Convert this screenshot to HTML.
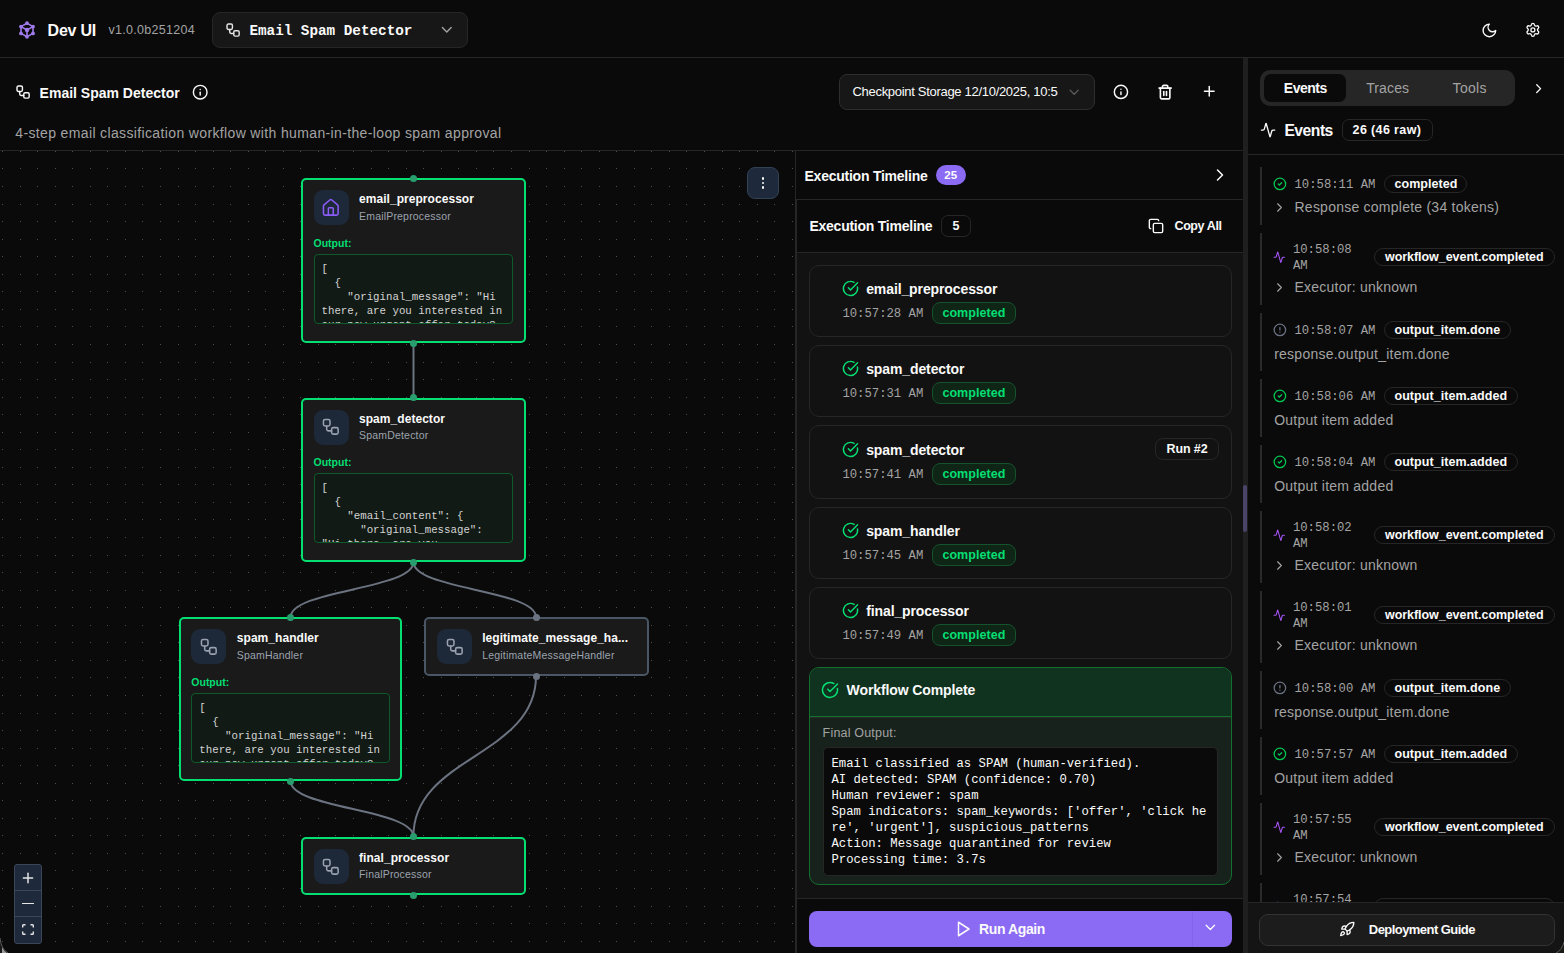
<!DOCTYPE html>
<html><head><meta charset="utf-8"><title>Dev UI</title>
<style>
html,body{margin:0;padding:0;}
body{width:1564px;height:953px;overflow:hidden;background:#0a0a0a;position:relative;font-family:"Liberation Sans", sans-serif;}
.a{position:absolute;}
.t{position:absolute;white-space:nowrap;}
.s{font-family:"Liberation Sans", sans-serif;}
.m{font-family:"Liberation Mono", monospace;}
svg{display:block;}
</style></head><body>
<div class="a" style="left:0px;top:57px;width:1564px;height:1px;background:#262626;"></div>
<svg class="a" style="left:18px;top:21px" width="18" height="18" viewBox="0 0 18 18"><g stroke="#9f7aea" stroke-width="1.6" fill="none"><path d="M9 2.2 L15 5.6 L15 12.4 L9 15.8 L3 12.4 L3 5.6 Z"/><path d="M9 9 L9 15.8 M9 9 L3 5.6 M9 9 L15 5.6"/></g><g fill="#9f7aea"><circle cx="9" cy="2.2" r="1.9"/><circle cx="15" cy="5.6" r="1.9"/><circle cx="15" cy="12.4" r="1.9"/><circle cx="9" cy="15.8" r="1.9"/><circle cx="3" cy="12.4" r="1.9"/><circle cx="3" cy="5.6" r="1.9"/><circle cx="9" cy="9" r="2.2"/></g></svg>
<div class="t s" style="left:47.60px;top:21.06px;font-size:16px;line-height:20.8px;color:#fafafa;font-weight:700;letter-spacing:-0.25px;">Dev UI</div>
<div class="t s" style="left:108.60px;top:21.54px;font-size:12.5px;line-height:16.25px;color:#a3a3a3;letter-spacing:0.28px;">v1.0.0b251204</div>
<div class="a" style="left:212px;top:12px;width:256px;height:36px;background:#171717;border:1px solid #262626;border-radius:8px;box-sizing:border-box;"></div>
<svg class="a" style="left:224.65px;top:21.95px;" width="16.2" height="16.2" viewBox="0 0 24 24" fill="none" stroke="#e5e5e5" stroke-width="2.1" stroke-linecap="round" stroke-linejoin="round"><rect width="8" height="8" x="3" y="3" rx="2"/><path d="M7 11v4a2 2 0 0 0 2 2h4"/><rect width="8" height="8" x="13" y="13" rx="2"/></svg>
<div class="t m" style="left:249.40px;top:21.79px;font-size:14.3px;line-height:18.59px;color:#fafafa;font-weight:700;">Email Spam Detector</div>
<svg class="a" style="left:438.2px;top:21.2px;" width="17.6" height="17.6" viewBox="0 0 24 24" fill="none" stroke="#a3a3a3" stroke-width="1.9" stroke-linecap="round" stroke-linejoin="round"><path d="m6 9 6 6 6-6"/></svg>
<svg class="a" style="left:1480.6px;top:21.7px;" width="16.8" height="16.8" viewBox="0 0 24 24" fill="none" stroke="#fafafa" stroke-width="2" stroke-linecap="round" stroke-linejoin="round"><path d="M12 3a6 6 0 0 0 9 9 9 9 0 1 1-9-9Z"/></svg>
<svg class="a" style="left:1525.1px;top:21.9px;" width="15.75" height="15.75" viewBox="0 0 24 24" fill="none" stroke="#fafafa" stroke-width="2" stroke-linecap="round" stroke-linejoin="round"><path d="M9.671 4.136a2.34 2.34 0 0 1 4.659 0 2.34 2.34 0 0 0 3.319 1.915 2.34 2.34 0 0 1 2.33 4.033 2.34 2.34 0 0 0 0 3.831 2.34 2.34 0 0 1-2.33 4.033 2.34 2.34 0 0 0-3.319 1.915 2.34 2.34 0 0 1-4.659 0 2.34 2.34 0 0 0-3.32-1.915 2.34 2.34 0 0 1-2.33-4.033 2.34 2.34 0 0 0 0-3.831A2.34 2.34 0 0 1 6.35 6.051a2.34 2.34 0 0 0 3.32-1.915"/><circle cx="12" cy="12" r="3"/></svg>
<div class="a" style="left:0px;top:150px;width:1243px;height:1px;background:#262626;"></div>
<svg class="a" style="left:14.95px;top:83.95px;" width="16.2" height="16.2" viewBox="0 0 24 24" fill="none" stroke="#fafafa" stroke-width="2.1" stroke-linecap="round" stroke-linejoin="round"><rect width="8" height="8" x="3" y="3" rx="2"/><path d="M7 11v4a2 2 0 0 0 2 2h4"/><rect width="8" height="8" x="13" y="13" rx="2"/></svg>
<div class="t s" style="left:39.60px;top:84.05px;font-size:14px;line-height:18.2px;color:#fafafa;font-weight:700;">Email Spam Detector</div>
<svg class="a" style="left:191.8px;top:83.9px;" width="16.4" height="16.4" viewBox="0 0 24 24" fill="none" stroke="#fafafa" stroke-width="2.1" stroke-linecap="round" stroke-linejoin="round"><circle cx="12" cy="12" r="10"/><path d="M12 16v-4"/><path d="M12 8h.01"/></svg>
<div class="t s" style="left:15.30px;top:123.55px;font-size:14px;line-height:18.2px;color:#a3a3a3;letter-spacing:0.36px;">4-step email classification workflow with human-in-the-loop spam approval</div>
<div class="a" style="left:839px;top:74px;width:256px;height:36px;background:#171717;border:1px solid #2e2e2e;border-radius:8px;box-sizing:border-box;"></div>
<div class="a" style="left:852px;top:80px;width:206px;height:24px;overflow:hidden;">
<div class="t s" style="left:0.50px;top:3.55px;font-size:13px;line-height:16.9px;color:#fafafa;letter-spacing:-0.3px;white-space:nowrap;">Checkpoint Storage 12/10/2025, 10:58:11 AM</div>
</div>
<svg class="a" style="left:1065.8px;top:83.7px;" width="16.3" height="16.3" viewBox="0 0 24 24" fill="none" stroke="#5c5c5c" stroke-width="2" stroke-linecap="round" stroke-linejoin="round"><path d="m6 9 6 6 6-6"/></svg>
<svg class="a" style="left:1113px;top:83.7px;" width="15.9" height="15.9" viewBox="0 0 24 24" fill="none" stroke="#fafafa" stroke-width="2.2" stroke-linecap="round" stroke-linejoin="round"><circle cx="12" cy="12" r="10"/><path d="M12 16v-4"/><path d="M12 8h.01"/></svg>
<svg class="a" style="left:1156.8px;top:83.9px;" width="16.25" height="16.25" viewBox="0 0 24 24" fill="none" stroke="#fafafa" stroke-width="2.4" stroke-linecap="round" stroke-linejoin="round"><path d="M3 6h18"/><path d="M19 6v14c0 1-1 2-2 2H7c-1 0-2-1-2-2V6"/><path d="M8 6V4c0-1 1-2 2-2h4c1 0 2 1 2 2v2"/><line x1="10" x2="10" y1="11" y2="17"/><line x1="14" x2="14" y1="11" y2="17"/></svg>
<svg class="a" style="left:1200.75px;top:83.45px;" width="16.5" height="16.5" viewBox="0 0 24 24" fill="none" stroke="#fafafa" stroke-width="2.2" stroke-linecap="round" stroke-linejoin="round"><path d="M5 12h14"/><path d="M12 5v14"/></svg>
<svg class="a" style="left:0;top:0" width="795" height="953"><path fill="#4d4d4d" d="M2 151h1v1h-1zM20 151h1v1h-1zM37 151h1v1h-1zM55 151h1v1h-1zM72 151h1v1h-1zM90 151h1v1h-1zM107 151h1v1h-1zM125 151h1v1h-1zM142 151h1v1h-1zM160 151h1v1h-1zM178 151h1v1h-1zM195 151h1v1h-1zM213 151h1v1h-1zM230 151h1v1h-1zM248 151h1v1h-1zM265 151h1v1h-1zM283 151h1v1h-1zM300 151h1v1h-1zM318 151h1v1h-1zM335 151h1v1h-1zM353 151h1v1h-1zM371 151h1v1h-1zM388 151h1v1h-1zM406 151h1v1h-1zM423 151h1v1h-1zM441 151h1v1h-1zM458 151h1v1h-1zM476 151h1v1h-1zM493 151h1v1h-1zM511 151h1v1h-1zM529 151h1v1h-1zM546 151h1v1h-1zM564 151h1v1h-1zM581 151h1v1h-1zM599 151h1v1h-1zM616 151h1v1h-1zM634 151h1v1h-1zM651 151h1v1h-1zM669 151h1v1h-1zM686 151h1v1h-1zM704 151h1v1h-1zM722 151h1v1h-1zM739 151h1v1h-1zM757 151h1v1h-1zM774 151h1v1h-1zM792 151h1v1h-1zM2 168h1v1h-1zM20 168h1v1h-1zM37 168h1v1h-1zM55 168h1v1h-1zM72 168h1v1h-1zM90 168h1v1h-1zM107 168h1v1h-1zM125 168h1v1h-1zM142 168h1v1h-1zM160 168h1v1h-1zM178 168h1v1h-1zM195 168h1v1h-1zM213 168h1v1h-1zM230 168h1v1h-1zM248 168h1v1h-1zM265 168h1v1h-1zM283 168h1v1h-1zM300 168h1v1h-1zM318 168h1v1h-1zM335 168h1v1h-1zM353 168h1v1h-1zM371 168h1v1h-1zM388 168h1v1h-1zM406 168h1v1h-1zM423 168h1v1h-1zM441 168h1v1h-1zM458 168h1v1h-1zM476 168h1v1h-1zM493 168h1v1h-1zM511 168h1v1h-1zM529 168h1v1h-1zM546 168h1v1h-1zM564 168h1v1h-1zM581 168h1v1h-1zM599 168h1v1h-1zM616 168h1v1h-1zM634 168h1v1h-1zM651 168h1v1h-1zM669 168h1v1h-1zM686 168h1v1h-1zM704 168h1v1h-1zM722 168h1v1h-1zM739 168h1v1h-1zM757 168h1v1h-1zM774 168h1v1h-1zM792 168h1v1h-1zM2 186h1v1h-1zM20 186h1v1h-1zM37 186h1v1h-1zM55 186h1v1h-1zM72 186h1v1h-1zM90 186h1v1h-1zM107 186h1v1h-1zM125 186h1v1h-1zM142 186h1v1h-1zM160 186h1v1h-1zM178 186h1v1h-1zM195 186h1v1h-1zM213 186h1v1h-1zM230 186h1v1h-1zM248 186h1v1h-1zM265 186h1v1h-1zM283 186h1v1h-1zM300 186h1v1h-1zM318 186h1v1h-1zM335 186h1v1h-1zM353 186h1v1h-1zM371 186h1v1h-1zM388 186h1v1h-1zM406 186h1v1h-1zM423 186h1v1h-1zM441 186h1v1h-1zM458 186h1v1h-1zM476 186h1v1h-1zM493 186h1v1h-1zM511 186h1v1h-1zM529 186h1v1h-1zM546 186h1v1h-1zM564 186h1v1h-1zM581 186h1v1h-1zM599 186h1v1h-1zM616 186h1v1h-1zM634 186h1v1h-1zM651 186h1v1h-1zM669 186h1v1h-1zM686 186h1v1h-1zM704 186h1v1h-1zM722 186h1v1h-1zM739 186h1v1h-1zM757 186h1v1h-1zM774 186h1v1h-1zM792 186h1v1h-1zM2 204h1v1h-1zM20 204h1v1h-1zM37 204h1v1h-1zM55 204h1v1h-1zM72 204h1v1h-1zM90 204h1v1h-1zM107 204h1v1h-1zM125 204h1v1h-1zM142 204h1v1h-1zM160 204h1v1h-1zM178 204h1v1h-1zM195 204h1v1h-1zM213 204h1v1h-1zM230 204h1v1h-1zM248 204h1v1h-1zM265 204h1v1h-1zM283 204h1v1h-1zM300 204h1v1h-1zM318 204h1v1h-1zM335 204h1v1h-1zM353 204h1v1h-1zM371 204h1v1h-1zM388 204h1v1h-1zM406 204h1v1h-1zM423 204h1v1h-1zM441 204h1v1h-1zM458 204h1v1h-1zM476 204h1v1h-1zM493 204h1v1h-1zM511 204h1v1h-1zM529 204h1v1h-1zM546 204h1v1h-1zM564 204h1v1h-1zM581 204h1v1h-1zM599 204h1v1h-1zM616 204h1v1h-1zM634 204h1v1h-1zM651 204h1v1h-1zM669 204h1v1h-1zM686 204h1v1h-1zM704 204h1v1h-1zM722 204h1v1h-1zM739 204h1v1h-1zM757 204h1v1h-1zM774 204h1v1h-1zM792 204h1v1h-1zM2 221h1v1h-1zM20 221h1v1h-1zM37 221h1v1h-1zM55 221h1v1h-1zM72 221h1v1h-1zM90 221h1v1h-1zM107 221h1v1h-1zM125 221h1v1h-1zM142 221h1v1h-1zM160 221h1v1h-1zM178 221h1v1h-1zM195 221h1v1h-1zM213 221h1v1h-1zM230 221h1v1h-1zM248 221h1v1h-1zM265 221h1v1h-1zM283 221h1v1h-1zM300 221h1v1h-1zM318 221h1v1h-1zM335 221h1v1h-1zM353 221h1v1h-1zM371 221h1v1h-1zM388 221h1v1h-1zM406 221h1v1h-1zM423 221h1v1h-1zM441 221h1v1h-1zM458 221h1v1h-1zM476 221h1v1h-1zM493 221h1v1h-1zM511 221h1v1h-1zM529 221h1v1h-1zM546 221h1v1h-1zM564 221h1v1h-1zM581 221h1v1h-1zM599 221h1v1h-1zM616 221h1v1h-1zM634 221h1v1h-1zM651 221h1v1h-1zM669 221h1v1h-1zM686 221h1v1h-1zM704 221h1v1h-1zM722 221h1v1h-1zM739 221h1v1h-1zM757 221h1v1h-1zM774 221h1v1h-1zM792 221h1v1h-1zM2 239h1v1h-1zM20 239h1v1h-1zM37 239h1v1h-1zM55 239h1v1h-1zM72 239h1v1h-1zM90 239h1v1h-1zM107 239h1v1h-1zM125 239h1v1h-1zM142 239h1v1h-1zM160 239h1v1h-1zM178 239h1v1h-1zM195 239h1v1h-1zM213 239h1v1h-1zM230 239h1v1h-1zM248 239h1v1h-1zM265 239h1v1h-1zM283 239h1v1h-1zM300 239h1v1h-1zM318 239h1v1h-1zM335 239h1v1h-1zM353 239h1v1h-1zM371 239h1v1h-1zM388 239h1v1h-1zM406 239h1v1h-1zM423 239h1v1h-1zM441 239h1v1h-1zM458 239h1v1h-1zM476 239h1v1h-1zM493 239h1v1h-1zM511 239h1v1h-1zM529 239h1v1h-1zM546 239h1v1h-1zM564 239h1v1h-1zM581 239h1v1h-1zM599 239h1v1h-1zM616 239h1v1h-1zM634 239h1v1h-1zM651 239h1v1h-1zM669 239h1v1h-1zM686 239h1v1h-1zM704 239h1v1h-1zM722 239h1v1h-1zM739 239h1v1h-1zM757 239h1v1h-1zM774 239h1v1h-1zM792 239h1v1h-1zM2 256h1v1h-1zM20 256h1v1h-1zM37 256h1v1h-1zM55 256h1v1h-1zM72 256h1v1h-1zM90 256h1v1h-1zM107 256h1v1h-1zM125 256h1v1h-1zM142 256h1v1h-1zM160 256h1v1h-1zM178 256h1v1h-1zM195 256h1v1h-1zM213 256h1v1h-1zM230 256h1v1h-1zM248 256h1v1h-1zM265 256h1v1h-1zM283 256h1v1h-1zM300 256h1v1h-1zM318 256h1v1h-1zM335 256h1v1h-1zM353 256h1v1h-1zM371 256h1v1h-1zM388 256h1v1h-1zM406 256h1v1h-1zM423 256h1v1h-1zM441 256h1v1h-1zM458 256h1v1h-1zM476 256h1v1h-1zM493 256h1v1h-1zM511 256h1v1h-1zM529 256h1v1h-1zM546 256h1v1h-1zM564 256h1v1h-1zM581 256h1v1h-1zM599 256h1v1h-1zM616 256h1v1h-1zM634 256h1v1h-1zM651 256h1v1h-1zM669 256h1v1h-1zM686 256h1v1h-1zM704 256h1v1h-1zM722 256h1v1h-1zM739 256h1v1h-1zM757 256h1v1h-1zM774 256h1v1h-1zM792 256h1v1h-1zM2 274h1v1h-1zM20 274h1v1h-1zM37 274h1v1h-1zM55 274h1v1h-1zM72 274h1v1h-1zM90 274h1v1h-1zM107 274h1v1h-1zM125 274h1v1h-1zM142 274h1v1h-1zM160 274h1v1h-1zM178 274h1v1h-1zM195 274h1v1h-1zM213 274h1v1h-1zM230 274h1v1h-1zM248 274h1v1h-1zM265 274h1v1h-1zM283 274h1v1h-1zM300 274h1v1h-1zM318 274h1v1h-1zM335 274h1v1h-1zM353 274h1v1h-1zM371 274h1v1h-1zM388 274h1v1h-1zM406 274h1v1h-1zM423 274h1v1h-1zM441 274h1v1h-1zM458 274h1v1h-1zM476 274h1v1h-1zM493 274h1v1h-1zM511 274h1v1h-1zM529 274h1v1h-1zM546 274h1v1h-1zM564 274h1v1h-1zM581 274h1v1h-1zM599 274h1v1h-1zM616 274h1v1h-1zM634 274h1v1h-1zM651 274h1v1h-1zM669 274h1v1h-1zM686 274h1v1h-1zM704 274h1v1h-1zM722 274h1v1h-1zM739 274h1v1h-1zM757 274h1v1h-1zM774 274h1v1h-1zM792 274h1v1h-1zM2 291h1v1h-1zM20 291h1v1h-1zM37 291h1v1h-1zM55 291h1v1h-1zM72 291h1v1h-1zM90 291h1v1h-1zM107 291h1v1h-1zM125 291h1v1h-1zM142 291h1v1h-1zM160 291h1v1h-1zM178 291h1v1h-1zM195 291h1v1h-1zM213 291h1v1h-1zM230 291h1v1h-1zM248 291h1v1h-1zM265 291h1v1h-1zM283 291h1v1h-1zM300 291h1v1h-1zM318 291h1v1h-1zM335 291h1v1h-1zM353 291h1v1h-1zM371 291h1v1h-1zM388 291h1v1h-1zM406 291h1v1h-1zM423 291h1v1h-1zM441 291h1v1h-1zM458 291h1v1h-1zM476 291h1v1h-1zM493 291h1v1h-1zM511 291h1v1h-1zM529 291h1v1h-1zM546 291h1v1h-1zM564 291h1v1h-1zM581 291h1v1h-1zM599 291h1v1h-1zM616 291h1v1h-1zM634 291h1v1h-1zM651 291h1v1h-1zM669 291h1v1h-1zM686 291h1v1h-1zM704 291h1v1h-1zM722 291h1v1h-1zM739 291h1v1h-1zM757 291h1v1h-1zM774 291h1v1h-1zM792 291h1v1h-1zM2 309h1v1h-1zM20 309h1v1h-1zM37 309h1v1h-1zM55 309h1v1h-1zM72 309h1v1h-1zM90 309h1v1h-1zM107 309h1v1h-1zM125 309h1v1h-1zM142 309h1v1h-1zM160 309h1v1h-1zM178 309h1v1h-1zM195 309h1v1h-1zM213 309h1v1h-1zM230 309h1v1h-1zM248 309h1v1h-1zM265 309h1v1h-1zM283 309h1v1h-1zM300 309h1v1h-1zM318 309h1v1h-1zM335 309h1v1h-1zM353 309h1v1h-1zM371 309h1v1h-1zM388 309h1v1h-1zM406 309h1v1h-1zM423 309h1v1h-1zM441 309h1v1h-1zM458 309h1v1h-1zM476 309h1v1h-1zM493 309h1v1h-1zM511 309h1v1h-1zM529 309h1v1h-1zM546 309h1v1h-1zM564 309h1v1h-1zM581 309h1v1h-1zM599 309h1v1h-1zM616 309h1v1h-1zM634 309h1v1h-1zM651 309h1v1h-1zM669 309h1v1h-1zM686 309h1v1h-1zM704 309h1v1h-1zM722 309h1v1h-1zM739 309h1v1h-1zM757 309h1v1h-1zM774 309h1v1h-1zM792 309h1v1h-1zM2 326h1v1h-1zM20 326h1v1h-1zM37 326h1v1h-1zM55 326h1v1h-1zM72 326h1v1h-1zM90 326h1v1h-1zM107 326h1v1h-1zM125 326h1v1h-1zM142 326h1v1h-1zM160 326h1v1h-1zM178 326h1v1h-1zM195 326h1v1h-1zM213 326h1v1h-1zM230 326h1v1h-1zM248 326h1v1h-1zM265 326h1v1h-1zM283 326h1v1h-1zM300 326h1v1h-1zM318 326h1v1h-1zM335 326h1v1h-1zM353 326h1v1h-1zM371 326h1v1h-1zM388 326h1v1h-1zM406 326h1v1h-1zM423 326h1v1h-1zM441 326h1v1h-1zM458 326h1v1h-1zM476 326h1v1h-1zM493 326h1v1h-1zM511 326h1v1h-1zM529 326h1v1h-1zM546 326h1v1h-1zM564 326h1v1h-1zM581 326h1v1h-1zM599 326h1v1h-1zM616 326h1v1h-1zM634 326h1v1h-1zM651 326h1v1h-1zM669 326h1v1h-1zM686 326h1v1h-1zM704 326h1v1h-1zM722 326h1v1h-1zM739 326h1v1h-1zM757 326h1v1h-1zM774 326h1v1h-1zM792 326h1v1h-1zM2 344h1v1h-1zM20 344h1v1h-1zM37 344h1v1h-1zM55 344h1v1h-1zM72 344h1v1h-1zM90 344h1v1h-1zM107 344h1v1h-1zM125 344h1v1h-1zM142 344h1v1h-1zM160 344h1v1h-1zM178 344h1v1h-1zM195 344h1v1h-1zM213 344h1v1h-1zM230 344h1v1h-1zM248 344h1v1h-1zM265 344h1v1h-1zM283 344h1v1h-1zM300 344h1v1h-1zM318 344h1v1h-1zM335 344h1v1h-1zM353 344h1v1h-1zM371 344h1v1h-1zM388 344h1v1h-1zM406 344h1v1h-1zM423 344h1v1h-1zM441 344h1v1h-1zM458 344h1v1h-1zM476 344h1v1h-1zM493 344h1v1h-1zM511 344h1v1h-1zM529 344h1v1h-1zM546 344h1v1h-1zM564 344h1v1h-1zM581 344h1v1h-1zM599 344h1v1h-1zM616 344h1v1h-1zM634 344h1v1h-1zM651 344h1v1h-1zM669 344h1v1h-1zM686 344h1v1h-1zM704 344h1v1h-1zM722 344h1v1h-1zM739 344h1v1h-1zM757 344h1v1h-1zM774 344h1v1h-1zM792 344h1v1h-1zM2 362h1v1h-1zM20 362h1v1h-1zM37 362h1v1h-1zM55 362h1v1h-1zM72 362h1v1h-1zM90 362h1v1h-1zM107 362h1v1h-1zM125 362h1v1h-1zM142 362h1v1h-1zM160 362h1v1h-1zM178 362h1v1h-1zM195 362h1v1h-1zM213 362h1v1h-1zM230 362h1v1h-1zM248 362h1v1h-1zM265 362h1v1h-1zM283 362h1v1h-1zM300 362h1v1h-1zM318 362h1v1h-1zM335 362h1v1h-1zM353 362h1v1h-1zM371 362h1v1h-1zM388 362h1v1h-1zM406 362h1v1h-1zM423 362h1v1h-1zM441 362h1v1h-1zM458 362h1v1h-1zM476 362h1v1h-1zM493 362h1v1h-1zM511 362h1v1h-1zM529 362h1v1h-1zM546 362h1v1h-1zM564 362h1v1h-1zM581 362h1v1h-1zM599 362h1v1h-1zM616 362h1v1h-1zM634 362h1v1h-1zM651 362h1v1h-1zM669 362h1v1h-1zM686 362h1v1h-1zM704 362h1v1h-1zM722 362h1v1h-1zM739 362h1v1h-1zM757 362h1v1h-1zM774 362h1v1h-1zM792 362h1v1h-1zM2 379h1v1h-1zM20 379h1v1h-1zM37 379h1v1h-1zM55 379h1v1h-1zM72 379h1v1h-1zM90 379h1v1h-1zM107 379h1v1h-1zM125 379h1v1h-1zM142 379h1v1h-1zM160 379h1v1h-1zM178 379h1v1h-1zM195 379h1v1h-1zM213 379h1v1h-1zM230 379h1v1h-1zM248 379h1v1h-1zM265 379h1v1h-1zM283 379h1v1h-1zM300 379h1v1h-1zM318 379h1v1h-1zM335 379h1v1h-1zM353 379h1v1h-1zM371 379h1v1h-1zM388 379h1v1h-1zM406 379h1v1h-1zM423 379h1v1h-1zM441 379h1v1h-1zM458 379h1v1h-1zM476 379h1v1h-1zM493 379h1v1h-1zM511 379h1v1h-1zM529 379h1v1h-1zM546 379h1v1h-1zM564 379h1v1h-1zM581 379h1v1h-1zM599 379h1v1h-1zM616 379h1v1h-1zM634 379h1v1h-1zM651 379h1v1h-1zM669 379h1v1h-1zM686 379h1v1h-1zM704 379h1v1h-1zM722 379h1v1h-1zM739 379h1v1h-1zM757 379h1v1h-1zM774 379h1v1h-1zM792 379h1v1h-1zM2 397h1v1h-1zM20 397h1v1h-1zM37 397h1v1h-1zM55 397h1v1h-1zM72 397h1v1h-1zM90 397h1v1h-1zM107 397h1v1h-1zM125 397h1v1h-1zM142 397h1v1h-1zM160 397h1v1h-1zM178 397h1v1h-1zM195 397h1v1h-1zM213 397h1v1h-1zM230 397h1v1h-1zM248 397h1v1h-1zM265 397h1v1h-1zM283 397h1v1h-1zM300 397h1v1h-1zM318 397h1v1h-1zM335 397h1v1h-1zM353 397h1v1h-1zM371 397h1v1h-1zM388 397h1v1h-1zM406 397h1v1h-1zM423 397h1v1h-1zM441 397h1v1h-1zM458 397h1v1h-1zM476 397h1v1h-1zM493 397h1v1h-1zM511 397h1v1h-1zM529 397h1v1h-1zM546 397h1v1h-1zM564 397h1v1h-1zM581 397h1v1h-1zM599 397h1v1h-1zM616 397h1v1h-1zM634 397h1v1h-1zM651 397h1v1h-1zM669 397h1v1h-1zM686 397h1v1h-1zM704 397h1v1h-1zM722 397h1v1h-1zM739 397h1v1h-1zM757 397h1v1h-1zM774 397h1v1h-1zM792 397h1v1h-1zM2 414h1v1h-1zM20 414h1v1h-1zM37 414h1v1h-1zM55 414h1v1h-1zM72 414h1v1h-1zM90 414h1v1h-1zM107 414h1v1h-1zM125 414h1v1h-1zM142 414h1v1h-1zM160 414h1v1h-1zM178 414h1v1h-1zM195 414h1v1h-1zM213 414h1v1h-1zM230 414h1v1h-1zM248 414h1v1h-1zM265 414h1v1h-1zM283 414h1v1h-1zM300 414h1v1h-1zM318 414h1v1h-1zM335 414h1v1h-1zM353 414h1v1h-1zM371 414h1v1h-1zM388 414h1v1h-1zM406 414h1v1h-1zM423 414h1v1h-1zM441 414h1v1h-1zM458 414h1v1h-1zM476 414h1v1h-1zM493 414h1v1h-1zM511 414h1v1h-1zM529 414h1v1h-1zM546 414h1v1h-1zM564 414h1v1h-1zM581 414h1v1h-1zM599 414h1v1h-1zM616 414h1v1h-1zM634 414h1v1h-1zM651 414h1v1h-1zM669 414h1v1h-1zM686 414h1v1h-1zM704 414h1v1h-1zM722 414h1v1h-1zM739 414h1v1h-1zM757 414h1v1h-1zM774 414h1v1h-1zM792 414h1v1h-1zM2 432h1v1h-1zM20 432h1v1h-1zM37 432h1v1h-1zM55 432h1v1h-1zM72 432h1v1h-1zM90 432h1v1h-1zM107 432h1v1h-1zM125 432h1v1h-1zM142 432h1v1h-1zM160 432h1v1h-1zM178 432h1v1h-1zM195 432h1v1h-1zM213 432h1v1h-1zM230 432h1v1h-1zM248 432h1v1h-1zM265 432h1v1h-1zM283 432h1v1h-1zM300 432h1v1h-1zM318 432h1v1h-1zM335 432h1v1h-1zM353 432h1v1h-1zM371 432h1v1h-1zM388 432h1v1h-1zM406 432h1v1h-1zM423 432h1v1h-1zM441 432h1v1h-1zM458 432h1v1h-1zM476 432h1v1h-1zM493 432h1v1h-1zM511 432h1v1h-1zM529 432h1v1h-1zM546 432h1v1h-1zM564 432h1v1h-1zM581 432h1v1h-1zM599 432h1v1h-1zM616 432h1v1h-1zM634 432h1v1h-1zM651 432h1v1h-1zM669 432h1v1h-1zM686 432h1v1h-1zM704 432h1v1h-1zM722 432h1v1h-1zM739 432h1v1h-1zM757 432h1v1h-1zM774 432h1v1h-1zM792 432h1v1h-1zM2 449h1v1h-1zM20 449h1v1h-1zM37 449h1v1h-1zM55 449h1v1h-1zM72 449h1v1h-1zM90 449h1v1h-1zM107 449h1v1h-1zM125 449h1v1h-1zM142 449h1v1h-1zM160 449h1v1h-1zM178 449h1v1h-1zM195 449h1v1h-1zM213 449h1v1h-1zM230 449h1v1h-1zM248 449h1v1h-1zM265 449h1v1h-1zM283 449h1v1h-1zM300 449h1v1h-1zM318 449h1v1h-1zM335 449h1v1h-1zM353 449h1v1h-1zM371 449h1v1h-1zM388 449h1v1h-1zM406 449h1v1h-1zM423 449h1v1h-1zM441 449h1v1h-1zM458 449h1v1h-1zM476 449h1v1h-1zM493 449h1v1h-1zM511 449h1v1h-1zM529 449h1v1h-1zM546 449h1v1h-1zM564 449h1v1h-1zM581 449h1v1h-1zM599 449h1v1h-1zM616 449h1v1h-1zM634 449h1v1h-1zM651 449h1v1h-1zM669 449h1v1h-1zM686 449h1v1h-1zM704 449h1v1h-1zM722 449h1v1h-1zM739 449h1v1h-1zM757 449h1v1h-1zM774 449h1v1h-1zM792 449h1v1h-1zM2 467h1v1h-1zM20 467h1v1h-1zM37 467h1v1h-1zM55 467h1v1h-1zM72 467h1v1h-1zM90 467h1v1h-1zM107 467h1v1h-1zM125 467h1v1h-1zM142 467h1v1h-1zM160 467h1v1h-1zM178 467h1v1h-1zM195 467h1v1h-1zM213 467h1v1h-1zM230 467h1v1h-1zM248 467h1v1h-1zM265 467h1v1h-1zM283 467h1v1h-1zM300 467h1v1h-1zM318 467h1v1h-1zM335 467h1v1h-1zM353 467h1v1h-1zM371 467h1v1h-1zM388 467h1v1h-1zM406 467h1v1h-1zM423 467h1v1h-1zM441 467h1v1h-1zM458 467h1v1h-1zM476 467h1v1h-1zM493 467h1v1h-1zM511 467h1v1h-1zM529 467h1v1h-1zM546 467h1v1h-1zM564 467h1v1h-1zM581 467h1v1h-1zM599 467h1v1h-1zM616 467h1v1h-1zM634 467h1v1h-1zM651 467h1v1h-1zM669 467h1v1h-1zM686 467h1v1h-1zM704 467h1v1h-1zM722 467h1v1h-1zM739 467h1v1h-1zM757 467h1v1h-1zM774 467h1v1h-1zM792 467h1v1h-1zM2 484h1v1h-1zM20 484h1v1h-1zM37 484h1v1h-1zM55 484h1v1h-1zM72 484h1v1h-1zM90 484h1v1h-1zM107 484h1v1h-1zM125 484h1v1h-1zM142 484h1v1h-1zM160 484h1v1h-1zM178 484h1v1h-1zM195 484h1v1h-1zM213 484h1v1h-1zM230 484h1v1h-1zM248 484h1v1h-1zM265 484h1v1h-1zM283 484h1v1h-1zM300 484h1v1h-1zM318 484h1v1h-1zM335 484h1v1h-1zM353 484h1v1h-1zM371 484h1v1h-1zM388 484h1v1h-1zM406 484h1v1h-1zM423 484h1v1h-1zM441 484h1v1h-1zM458 484h1v1h-1zM476 484h1v1h-1zM493 484h1v1h-1zM511 484h1v1h-1zM529 484h1v1h-1zM546 484h1v1h-1zM564 484h1v1h-1zM581 484h1v1h-1zM599 484h1v1h-1zM616 484h1v1h-1zM634 484h1v1h-1zM651 484h1v1h-1zM669 484h1v1h-1zM686 484h1v1h-1zM704 484h1v1h-1zM722 484h1v1h-1zM739 484h1v1h-1zM757 484h1v1h-1zM774 484h1v1h-1zM792 484h1v1h-1zM2 502h1v1h-1zM20 502h1v1h-1zM37 502h1v1h-1zM55 502h1v1h-1zM72 502h1v1h-1zM90 502h1v1h-1zM107 502h1v1h-1zM125 502h1v1h-1zM142 502h1v1h-1zM160 502h1v1h-1zM178 502h1v1h-1zM195 502h1v1h-1zM213 502h1v1h-1zM230 502h1v1h-1zM248 502h1v1h-1zM265 502h1v1h-1zM283 502h1v1h-1zM300 502h1v1h-1zM318 502h1v1h-1zM335 502h1v1h-1zM353 502h1v1h-1zM371 502h1v1h-1zM388 502h1v1h-1zM406 502h1v1h-1zM423 502h1v1h-1zM441 502h1v1h-1zM458 502h1v1h-1zM476 502h1v1h-1zM493 502h1v1h-1zM511 502h1v1h-1zM529 502h1v1h-1zM546 502h1v1h-1zM564 502h1v1h-1zM581 502h1v1h-1zM599 502h1v1h-1zM616 502h1v1h-1zM634 502h1v1h-1zM651 502h1v1h-1zM669 502h1v1h-1zM686 502h1v1h-1zM704 502h1v1h-1zM722 502h1v1h-1zM739 502h1v1h-1zM757 502h1v1h-1zM774 502h1v1h-1zM792 502h1v1h-1zM2 519h1v1h-1zM20 519h1v1h-1zM37 519h1v1h-1zM55 519h1v1h-1zM72 519h1v1h-1zM90 519h1v1h-1zM107 519h1v1h-1zM125 519h1v1h-1zM142 519h1v1h-1zM160 519h1v1h-1zM178 519h1v1h-1zM195 519h1v1h-1zM213 519h1v1h-1zM230 519h1v1h-1zM248 519h1v1h-1zM265 519h1v1h-1zM283 519h1v1h-1zM300 519h1v1h-1zM318 519h1v1h-1zM335 519h1v1h-1zM353 519h1v1h-1zM371 519h1v1h-1zM388 519h1v1h-1zM406 519h1v1h-1zM423 519h1v1h-1zM441 519h1v1h-1zM458 519h1v1h-1zM476 519h1v1h-1zM493 519h1v1h-1zM511 519h1v1h-1zM529 519h1v1h-1zM546 519h1v1h-1zM564 519h1v1h-1zM581 519h1v1h-1zM599 519h1v1h-1zM616 519h1v1h-1zM634 519h1v1h-1zM651 519h1v1h-1zM669 519h1v1h-1zM686 519h1v1h-1zM704 519h1v1h-1zM722 519h1v1h-1zM739 519h1v1h-1zM757 519h1v1h-1zM774 519h1v1h-1zM792 519h1v1h-1zM2 537h1v1h-1zM20 537h1v1h-1zM37 537h1v1h-1zM55 537h1v1h-1zM72 537h1v1h-1zM90 537h1v1h-1zM107 537h1v1h-1zM125 537h1v1h-1zM142 537h1v1h-1zM160 537h1v1h-1zM178 537h1v1h-1zM195 537h1v1h-1zM213 537h1v1h-1zM230 537h1v1h-1zM248 537h1v1h-1zM265 537h1v1h-1zM283 537h1v1h-1zM300 537h1v1h-1zM318 537h1v1h-1zM335 537h1v1h-1zM353 537h1v1h-1zM371 537h1v1h-1zM388 537h1v1h-1zM406 537h1v1h-1zM423 537h1v1h-1zM441 537h1v1h-1zM458 537h1v1h-1zM476 537h1v1h-1zM493 537h1v1h-1zM511 537h1v1h-1zM529 537h1v1h-1zM546 537h1v1h-1zM564 537h1v1h-1zM581 537h1v1h-1zM599 537h1v1h-1zM616 537h1v1h-1zM634 537h1v1h-1zM651 537h1v1h-1zM669 537h1v1h-1zM686 537h1v1h-1zM704 537h1v1h-1zM722 537h1v1h-1zM739 537h1v1h-1zM757 537h1v1h-1zM774 537h1v1h-1zM792 537h1v1h-1zM2 555h1v1h-1zM20 555h1v1h-1zM37 555h1v1h-1zM55 555h1v1h-1zM72 555h1v1h-1zM90 555h1v1h-1zM107 555h1v1h-1zM125 555h1v1h-1zM142 555h1v1h-1zM160 555h1v1h-1zM178 555h1v1h-1zM195 555h1v1h-1zM213 555h1v1h-1zM230 555h1v1h-1zM248 555h1v1h-1zM265 555h1v1h-1zM283 555h1v1h-1zM300 555h1v1h-1zM318 555h1v1h-1zM335 555h1v1h-1zM353 555h1v1h-1zM371 555h1v1h-1zM388 555h1v1h-1zM406 555h1v1h-1zM423 555h1v1h-1zM441 555h1v1h-1zM458 555h1v1h-1zM476 555h1v1h-1zM493 555h1v1h-1zM511 555h1v1h-1zM529 555h1v1h-1zM546 555h1v1h-1zM564 555h1v1h-1zM581 555h1v1h-1zM599 555h1v1h-1zM616 555h1v1h-1zM634 555h1v1h-1zM651 555h1v1h-1zM669 555h1v1h-1zM686 555h1v1h-1zM704 555h1v1h-1zM722 555h1v1h-1zM739 555h1v1h-1zM757 555h1v1h-1zM774 555h1v1h-1zM792 555h1v1h-1zM2 572h1v1h-1zM20 572h1v1h-1zM37 572h1v1h-1zM55 572h1v1h-1zM72 572h1v1h-1zM90 572h1v1h-1zM107 572h1v1h-1zM125 572h1v1h-1zM142 572h1v1h-1zM160 572h1v1h-1zM178 572h1v1h-1zM195 572h1v1h-1zM213 572h1v1h-1zM230 572h1v1h-1zM248 572h1v1h-1zM265 572h1v1h-1zM283 572h1v1h-1zM300 572h1v1h-1zM318 572h1v1h-1zM335 572h1v1h-1zM353 572h1v1h-1zM371 572h1v1h-1zM388 572h1v1h-1zM406 572h1v1h-1zM423 572h1v1h-1zM441 572h1v1h-1zM458 572h1v1h-1zM476 572h1v1h-1zM493 572h1v1h-1zM511 572h1v1h-1zM529 572h1v1h-1zM546 572h1v1h-1zM564 572h1v1h-1zM581 572h1v1h-1zM599 572h1v1h-1zM616 572h1v1h-1zM634 572h1v1h-1zM651 572h1v1h-1zM669 572h1v1h-1zM686 572h1v1h-1zM704 572h1v1h-1zM722 572h1v1h-1zM739 572h1v1h-1zM757 572h1v1h-1zM774 572h1v1h-1zM792 572h1v1h-1zM2 590h1v1h-1zM20 590h1v1h-1zM37 590h1v1h-1zM55 590h1v1h-1zM72 590h1v1h-1zM90 590h1v1h-1zM107 590h1v1h-1zM125 590h1v1h-1zM142 590h1v1h-1zM160 590h1v1h-1zM178 590h1v1h-1zM195 590h1v1h-1zM213 590h1v1h-1zM230 590h1v1h-1zM248 590h1v1h-1zM265 590h1v1h-1zM283 590h1v1h-1zM300 590h1v1h-1zM318 590h1v1h-1zM335 590h1v1h-1zM353 590h1v1h-1zM371 590h1v1h-1zM388 590h1v1h-1zM406 590h1v1h-1zM423 590h1v1h-1zM441 590h1v1h-1zM458 590h1v1h-1zM476 590h1v1h-1zM493 590h1v1h-1zM511 590h1v1h-1zM529 590h1v1h-1zM546 590h1v1h-1zM564 590h1v1h-1zM581 590h1v1h-1zM599 590h1v1h-1zM616 590h1v1h-1zM634 590h1v1h-1zM651 590h1v1h-1zM669 590h1v1h-1zM686 590h1v1h-1zM704 590h1v1h-1zM722 590h1v1h-1zM739 590h1v1h-1zM757 590h1v1h-1zM774 590h1v1h-1zM792 590h1v1h-1zM2 607h1v1h-1zM20 607h1v1h-1zM37 607h1v1h-1zM55 607h1v1h-1zM72 607h1v1h-1zM90 607h1v1h-1zM107 607h1v1h-1zM125 607h1v1h-1zM142 607h1v1h-1zM160 607h1v1h-1zM178 607h1v1h-1zM195 607h1v1h-1zM213 607h1v1h-1zM230 607h1v1h-1zM248 607h1v1h-1zM265 607h1v1h-1zM283 607h1v1h-1zM300 607h1v1h-1zM318 607h1v1h-1zM335 607h1v1h-1zM353 607h1v1h-1zM371 607h1v1h-1zM388 607h1v1h-1zM406 607h1v1h-1zM423 607h1v1h-1zM441 607h1v1h-1zM458 607h1v1h-1zM476 607h1v1h-1zM493 607h1v1h-1zM511 607h1v1h-1zM529 607h1v1h-1zM546 607h1v1h-1zM564 607h1v1h-1zM581 607h1v1h-1zM599 607h1v1h-1zM616 607h1v1h-1zM634 607h1v1h-1zM651 607h1v1h-1zM669 607h1v1h-1zM686 607h1v1h-1zM704 607h1v1h-1zM722 607h1v1h-1zM739 607h1v1h-1zM757 607h1v1h-1zM774 607h1v1h-1zM792 607h1v1h-1zM2 625h1v1h-1zM20 625h1v1h-1zM37 625h1v1h-1zM55 625h1v1h-1zM72 625h1v1h-1zM90 625h1v1h-1zM107 625h1v1h-1zM125 625h1v1h-1zM142 625h1v1h-1zM160 625h1v1h-1zM178 625h1v1h-1zM195 625h1v1h-1zM213 625h1v1h-1zM230 625h1v1h-1zM248 625h1v1h-1zM265 625h1v1h-1zM283 625h1v1h-1zM300 625h1v1h-1zM318 625h1v1h-1zM335 625h1v1h-1zM353 625h1v1h-1zM371 625h1v1h-1zM388 625h1v1h-1zM406 625h1v1h-1zM423 625h1v1h-1zM441 625h1v1h-1zM458 625h1v1h-1zM476 625h1v1h-1zM493 625h1v1h-1zM511 625h1v1h-1zM529 625h1v1h-1zM546 625h1v1h-1zM564 625h1v1h-1zM581 625h1v1h-1zM599 625h1v1h-1zM616 625h1v1h-1zM634 625h1v1h-1zM651 625h1v1h-1zM669 625h1v1h-1zM686 625h1v1h-1zM704 625h1v1h-1zM722 625h1v1h-1zM739 625h1v1h-1zM757 625h1v1h-1zM774 625h1v1h-1zM792 625h1v1h-1zM2 642h1v1h-1zM20 642h1v1h-1zM37 642h1v1h-1zM55 642h1v1h-1zM72 642h1v1h-1zM90 642h1v1h-1zM107 642h1v1h-1zM125 642h1v1h-1zM142 642h1v1h-1zM160 642h1v1h-1zM178 642h1v1h-1zM195 642h1v1h-1zM213 642h1v1h-1zM230 642h1v1h-1zM248 642h1v1h-1zM265 642h1v1h-1zM283 642h1v1h-1zM300 642h1v1h-1zM318 642h1v1h-1zM335 642h1v1h-1zM353 642h1v1h-1zM371 642h1v1h-1zM388 642h1v1h-1zM406 642h1v1h-1zM423 642h1v1h-1zM441 642h1v1h-1zM458 642h1v1h-1zM476 642h1v1h-1zM493 642h1v1h-1zM511 642h1v1h-1zM529 642h1v1h-1zM546 642h1v1h-1zM564 642h1v1h-1zM581 642h1v1h-1zM599 642h1v1h-1zM616 642h1v1h-1zM634 642h1v1h-1zM651 642h1v1h-1zM669 642h1v1h-1zM686 642h1v1h-1zM704 642h1v1h-1zM722 642h1v1h-1zM739 642h1v1h-1zM757 642h1v1h-1zM774 642h1v1h-1zM792 642h1v1h-1zM2 660h1v1h-1zM20 660h1v1h-1zM37 660h1v1h-1zM55 660h1v1h-1zM72 660h1v1h-1zM90 660h1v1h-1zM107 660h1v1h-1zM125 660h1v1h-1zM142 660h1v1h-1zM160 660h1v1h-1zM178 660h1v1h-1zM195 660h1v1h-1zM213 660h1v1h-1zM230 660h1v1h-1zM248 660h1v1h-1zM265 660h1v1h-1zM283 660h1v1h-1zM300 660h1v1h-1zM318 660h1v1h-1zM335 660h1v1h-1zM353 660h1v1h-1zM371 660h1v1h-1zM388 660h1v1h-1zM406 660h1v1h-1zM423 660h1v1h-1zM441 660h1v1h-1zM458 660h1v1h-1zM476 660h1v1h-1zM493 660h1v1h-1zM511 660h1v1h-1zM529 660h1v1h-1zM546 660h1v1h-1zM564 660h1v1h-1zM581 660h1v1h-1zM599 660h1v1h-1zM616 660h1v1h-1zM634 660h1v1h-1zM651 660h1v1h-1zM669 660h1v1h-1zM686 660h1v1h-1zM704 660h1v1h-1zM722 660h1v1h-1zM739 660h1v1h-1zM757 660h1v1h-1zM774 660h1v1h-1zM792 660h1v1h-1zM2 677h1v1h-1zM20 677h1v1h-1zM37 677h1v1h-1zM55 677h1v1h-1zM72 677h1v1h-1zM90 677h1v1h-1zM107 677h1v1h-1zM125 677h1v1h-1zM142 677h1v1h-1zM160 677h1v1h-1zM178 677h1v1h-1zM195 677h1v1h-1zM213 677h1v1h-1zM230 677h1v1h-1zM248 677h1v1h-1zM265 677h1v1h-1zM283 677h1v1h-1zM300 677h1v1h-1zM318 677h1v1h-1zM335 677h1v1h-1zM353 677h1v1h-1zM371 677h1v1h-1zM388 677h1v1h-1zM406 677h1v1h-1zM423 677h1v1h-1zM441 677h1v1h-1zM458 677h1v1h-1zM476 677h1v1h-1zM493 677h1v1h-1zM511 677h1v1h-1zM529 677h1v1h-1zM546 677h1v1h-1zM564 677h1v1h-1zM581 677h1v1h-1zM599 677h1v1h-1zM616 677h1v1h-1zM634 677h1v1h-1zM651 677h1v1h-1zM669 677h1v1h-1zM686 677h1v1h-1zM704 677h1v1h-1zM722 677h1v1h-1zM739 677h1v1h-1zM757 677h1v1h-1zM774 677h1v1h-1zM792 677h1v1h-1zM2 695h1v1h-1zM20 695h1v1h-1zM37 695h1v1h-1zM55 695h1v1h-1zM72 695h1v1h-1zM90 695h1v1h-1zM107 695h1v1h-1zM125 695h1v1h-1zM142 695h1v1h-1zM160 695h1v1h-1zM178 695h1v1h-1zM195 695h1v1h-1zM213 695h1v1h-1zM230 695h1v1h-1zM248 695h1v1h-1zM265 695h1v1h-1zM283 695h1v1h-1zM300 695h1v1h-1zM318 695h1v1h-1zM335 695h1v1h-1zM353 695h1v1h-1zM371 695h1v1h-1zM388 695h1v1h-1zM406 695h1v1h-1zM423 695h1v1h-1zM441 695h1v1h-1zM458 695h1v1h-1zM476 695h1v1h-1zM493 695h1v1h-1zM511 695h1v1h-1zM529 695h1v1h-1zM546 695h1v1h-1zM564 695h1v1h-1zM581 695h1v1h-1zM599 695h1v1h-1zM616 695h1v1h-1zM634 695h1v1h-1zM651 695h1v1h-1zM669 695h1v1h-1zM686 695h1v1h-1zM704 695h1v1h-1zM722 695h1v1h-1zM739 695h1v1h-1zM757 695h1v1h-1zM774 695h1v1h-1zM792 695h1v1h-1zM2 713h1v1h-1zM20 713h1v1h-1zM37 713h1v1h-1zM55 713h1v1h-1zM72 713h1v1h-1zM90 713h1v1h-1zM107 713h1v1h-1zM125 713h1v1h-1zM142 713h1v1h-1zM160 713h1v1h-1zM178 713h1v1h-1zM195 713h1v1h-1zM213 713h1v1h-1zM230 713h1v1h-1zM248 713h1v1h-1zM265 713h1v1h-1zM283 713h1v1h-1zM300 713h1v1h-1zM318 713h1v1h-1zM335 713h1v1h-1zM353 713h1v1h-1zM371 713h1v1h-1zM388 713h1v1h-1zM406 713h1v1h-1zM423 713h1v1h-1zM441 713h1v1h-1zM458 713h1v1h-1zM476 713h1v1h-1zM493 713h1v1h-1zM511 713h1v1h-1zM529 713h1v1h-1zM546 713h1v1h-1zM564 713h1v1h-1zM581 713h1v1h-1zM599 713h1v1h-1zM616 713h1v1h-1zM634 713h1v1h-1zM651 713h1v1h-1zM669 713h1v1h-1zM686 713h1v1h-1zM704 713h1v1h-1zM722 713h1v1h-1zM739 713h1v1h-1zM757 713h1v1h-1zM774 713h1v1h-1zM792 713h1v1h-1zM2 730h1v1h-1zM20 730h1v1h-1zM37 730h1v1h-1zM55 730h1v1h-1zM72 730h1v1h-1zM90 730h1v1h-1zM107 730h1v1h-1zM125 730h1v1h-1zM142 730h1v1h-1zM160 730h1v1h-1zM178 730h1v1h-1zM195 730h1v1h-1zM213 730h1v1h-1zM230 730h1v1h-1zM248 730h1v1h-1zM265 730h1v1h-1zM283 730h1v1h-1zM300 730h1v1h-1zM318 730h1v1h-1zM335 730h1v1h-1zM353 730h1v1h-1zM371 730h1v1h-1zM388 730h1v1h-1zM406 730h1v1h-1zM423 730h1v1h-1zM441 730h1v1h-1zM458 730h1v1h-1zM476 730h1v1h-1zM493 730h1v1h-1zM511 730h1v1h-1zM529 730h1v1h-1zM546 730h1v1h-1zM564 730h1v1h-1zM581 730h1v1h-1zM599 730h1v1h-1zM616 730h1v1h-1zM634 730h1v1h-1zM651 730h1v1h-1zM669 730h1v1h-1zM686 730h1v1h-1zM704 730h1v1h-1zM722 730h1v1h-1zM739 730h1v1h-1zM757 730h1v1h-1zM774 730h1v1h-1zM792 730h1v1h-1zM2 748h1v1h-1zM20 748h1v1h-1zM37 748h1v1h-1zM55 748h1v1h-1zM72 748h1v1h-1zM90 748h1v1h-1zM107 748h1v1h-1zM125 748h1v1h-1zM142 748h1v1h-1zM160 748h1v1h-1zM178 748h1v1h-1zM195 748h1v1h-1zM213 748h1v1h-1zM230 748h1v1h-1zM248 748h1v1h-1zM265 748h1v1h-1zM283 748h1v1h-1zM300 748h1v1h-1zM318 748h1v1h-1zM335 748h1v1h-1zM353 748h1v1h-1zM371 748h1v1h-1zM388 748h1v1h-1zM406 748h1v1h-1zM423 748h1v1h-1zM441 748h1v1h-1zM458 748h1v1h-1zM476 748h1v1h-1zM493 748h1v1h-1zM511 748h1v1h-1zM529 748h1v1h-1zM546 748h1v1h-1zM564 748h1v1h-1zM581 748h1v1h-1zM599 748h1v1h-1zM616 748h1v1h-1zM634 748h1v1h-1zM651 748h1v1h-1zM669 748h1v1h-1zM686 748h1v1h-1zM704 748h1v1h-1zM722 748h1v1h-1zM739 748h1v1h-1zM757 748h1v1h-1zM774 748h1v1h-1zM792 748h1v1h-1zM2 765h1v1h-1zM20 765h1v1h-1zM37 765h1v1h-1zM55 765h1v1h-1zM72 765h1v1h-1zM90 765h1v1h-1zM107 765h1v1h-1zM125 765h1v1h-1zM142 765h1v1h-1zM160 765h1v1h-1zM178 765h1v1h-1zM195 765h1v1h-1zM213 765h1v1h-1zM230 765h1v1h-1zM248 765h1v1h-1zM265 765h1v1h-1zM283 765h1v1h-1zM300 765h1v1h-1zM318 765h1v1h-1zM335 765h1v1h-1zM353 765h1v1h-1zM371 765h1v1h-1zM388 765h1v1h-1zM406 765h1v1h-1zM423 765h1v1h-1zM441 765h1v1h-1zM458 765h1v1h-1zM476 765h1v1h-1zM493 765h1v1h-1zM511 765h1v1h-1zM529 765h1v1h-1zM546 765h1v1h-1zM564 765h1v1h-1zM581 765h1v1h-1zM599 765h1v1h-1zM616 765h1v1h-1zM634 765h1v1h-1zM651 765h1v1h-1zM669 765h1v1h-1zM686 765h1v1h-1zM704 765h1v1h-1zM722 765h1v1h-1zM739 765h1v1h-1zM757 765h1v1h-1zM774 765h1v1h-1zM792 765h1v1h-1zM2 783h1v1h-1zM20 783h1v1h-1zM37 783h1v1h-1zM55 783h1v1h-1zM72 783h1v1h-1zM90 783h1v1h-1zM107 783h1v1h-1zM125 783h1v1h-1zM142 783h1v1h-1zM160 783h1v1h-1zM178 783h1v1h-1zM195 783h1v1h-1zM213 783h1v1h-1zM230 783h1v1h-1zM248 783h1v1h-1zM265 783h1v1h-1zM283 783h1v1h-1zM300 783h1v1h-1zM318 783h1v1h-1zM335 783h1v1h-1zM353 783h1v1h-1zM371 783h1v1h-1zM388 783h1v1h-1zM406 783h1v1h-1zM423 783h1v1h-1zM441 783h1v1h-1zM458 783h1v1h-1zM476 783h1v1h-1zM493 783h1v1h-1zM511 783h1v1h-1zM529 783h1v1h-1zM546 783h1v1h-1zM564 783h1v1h-1zM581 783h1v1h-1zM599 783h1v1h-1zM616 783h1v1h-1zM634 783h1v1h-1zM651 783h1v1h-1zM669 783h1v1h-1zM686 783h1v1h-1zM704 783h1v1h-1zM722 783h1v1h-1zM739 783h1v1h-1zM757 783h1v1h-1zM774 783h1v1h-1zM792 783h1v1h-1zM2 800h1v1h-1zM20 800h1v1h-1zM37 800h1v1h-1zM55 800h1v1h-1zM72 800h1v1h-1zM90 800h1v1h-1zM107 800h1v1h-1zM125 800h1v1h-1zM142 800h1v1h-1zM160 800h1v1h-1zM178 800h1v1h-1zM195 800h1v1h-1zM213 800h1v1h-1zM230 800h1v1h-1zM248 800h1v1h-1zM265 800h1v1h-1zM283 800h1v1h-1zM300 800h1v1h-1zM318 800h1v1h-1zM335 800h1v1h-1zM353 800h1v1h-1zM371 800h1v1h-1zM388 800h1v1h-1zM406 800h1v1h-1zM423 800h1v1h-1zM441 800h1v1h-1zM458 800h1v1h-1zM476 800h1v1h-1zM493 800h1v1h-1zM511 800h1v1h-1zM529 800h1v1h-1zM546 800h1v1h-1zM564 800h1v1h-1zM581 800h1v1h-1zM599 800h1v1h-1zM616 800h1v1h-1zM634 800h1v1h-1zM651 800h1v1h-1zM669 800h1v1h-1zM686 800h1v1h-1zM704 800h1v1h-1zM722 800h1v1h-1zM739 800h1v1h-1zM757 800h1v1h-1zM774 800h1v1h-1zM792 800h1v1h-1zM2 818h1v1h-1zM20 818h1v1h-1zM37 818h1v1h-1zM55 818h1v1h-1zM72 818h1v1h-1zM90 818h1v1h-1zM107 818h1v1h-1zM125 818h1v1h-1zM142 818h1v1h-1zM160 818h1v1h-1zM178 818h1v1h-1zM195 818h1v1h-1zM213 818h1v1h-1zM230 818h1v1h-1zM248 818h1v1h-1zM265 818h1v1h-1zM283 818h1v1h-1zM300 818h1v1h-1zM318 818h1v1h-1zM335 818h1v1h-1zM353 818h1v1h-1zM371 818h1v1h-1zM388 818h1v1h-1zM406 818h1v1h-1zM423 818h1v1h-1zM441 818h1v1h-1zM458 818h1v1h-1zM476 818h1v1h-1zM493 818h1v1h-1zM511 818h1v1h-1zM529 818h1v1h-1zM546 818h1v1h-1zM564 818h1v1h-1zM581 818h1v1h-1zM599 818h1v1h-1zM616 818h1v1h-1zM634 818h1v1h-1zM651 818h1v1h-1zM669 818h1v1h-1zM686 818h1v1h-1zM704 818h1v1h-1zM722 818h1v1h-1zM739 818h1v1h-1zM757 818h1v1h-1zM774 818h1v1h-1zM792 818h1v1h-1zM2 835h1v1h-1zM20 835h1v1h-1zM37 835h1v1h-1zM55 835h1v1h-1zM72 835h1v1h-1zM90 835h1v1h-1zM107 835h1v1h-1zM125 835h1v1h-1zM142 835h1v1h-1zM160 835h1v1h-1zM178 835h1v1h-1zM195 835h1v1h-1zM213 835h1v1h-1zM230 835h1v1h-1zM248 835h1v1h-1zM265 835h1v1h-1zM283 835h1v1h-1zM300 835h1v1h-1zM318 835h1v1h-1zM335 835h1v1h-1zM353 835h1v1h-1zM371 835h1v1h-1zM388 835h1v1h-1zM406 835h1v1h-1zM423 835h1v1h-1zM441 835h1v1h-1zM458 835h1v1h-1zM476 835h1v1h-1zM493 835h1v1h-1zM511 835h1v1h-1zM529 835h1v1h-1zM546 835h1v1h-1zM564 835h1v1h-1zM581 835h1v1h-1zM599 835h1v1h-1zM616 835h1v1h-1zM634 835h1v1h-1zM651 835h1v1h-1zM669 835h1v1h-1zM686 835h1v1h-1zM704 835h1v1h-1zM722 835h1v1h-1zM739 835h1v1h-1zM757 835h1v1h-1zM774 835h1v1h-1zM792 835h1v1h-1zM2 853h1v1h-1zM20 853h1v1h-1zM37 853h1v1h-1zM55 853h1v1h-1zM72 853h1v1h-1zM90 853h1v1h-1zM107 853h1v1h-1zM125 853h1v1h-1zM142 853h1v1h-1zM160 853h1v1h-1zM178 853h1v1h-1zM195 853h1v1h-1zM213 853h1v1h-1zM230 853h1v1h-1zM248 853h1v1h-1zM265 853h1v1h-1zM283 853h1v1h-1zM300 853h1v1h-1zM318 853h1v1h-1zM335 853h1v1h-1zM353 853h1v1h-1zM371 853h1v1h-1zM388 853h1v1h-1zM406 853h1v1h-1zM423 853h1v1h-1zM441 853h1v1h-1zM458 853h1v1h-1zM476 853h1v1h-1zM493 853h1v1h-1zM511 853h1v1h-1zM529 853h1v1h-1zM546 853h1v1h-1zM564 853h1v1h-1zM581 853h1v1h-1zM599 853h1v1h-1zM616 853h1v1h-1zM634 853h1v1h-1zM651 853h1v1h-1zM669 853h1v1h-1zM686 853h1v1h-1zM704 853h1v1h-1zM722 853h1v1h-1zM739 853h1v1h-1zM757 853h1v1h-1zM774 853h1v1h-1zM792 853h1v1h-1zM2 870h1v1h-1zM20 870h1v1h-1zM37 870h1v1h-1zM55 870h1v1h-1zM72 870h1v1h-1zM90 870h1v1h-1zM107 870h1v1h-1zM125 870h1v1h-1zM142 870h1v1h-1zM160 870h1v1h-1zM178 870h1v1h-1zM195 870h1v1h-1zM213 870h1v1h-1zM230 870h1v1h-1zM248 870h1v1h-1zM265 870h1v1h-1zM283 870h1v1h-1zM300 870h1v1h-1zM318 870h1v1h-1zM335 870h1v1h-1zM353 870h1v1h-1zM371 870h1v1h-1zM388 870h1v1h-1zM406 870h1v1h-1zM423 870h1v1h-1zM441 870h1v1h-1zM458 870h1v1h-1zM476 870h1v1h-1zM493 870h1v1h-1zM511 870h1v1h-1zM529 870h1v1h-1zM546 870h1v1h-1zM564 870h1v1h-1zM581 870h1v1h-1zM599 870h1v1h-1zM616 870h1v1h-1zM634 870h1v1h-1zM651 870h1v1h-1zM669 870h1v1h-1zM686 870h1v1h-1zM704 870h1v1h-1zM722 870h1v1h-1zM739 870h1v1h-1zM757 870h1v1h-1zM774 870h1v1h-1zM792 870h1v1h-1zM2 888h1v1h-1zM20 888h1v1h-1zM37 888h1v1h-1zM55 888h1v1h-1zM72 888h1v1h-1zM90 888h1v1h-1zM107 888h1v1h-1zM125 888h1v1h-1zM142 888h1v1h-1zM160 888h1v1h-1zM178 888h1v1h-1zM195 888h1v1h-1zM213 888h1v1h-1zM230 888h1v1h-1zM248 888h1v1h-1zM265 888h1v1h-1zM283 888h1v1h-1zM300 888h1v1h-1zM318 888h1v1h-1zM335 888h1v1h-1zM353 888h1v1h-1zM371 888h1v1h-1zM388 888h1v1h-1zM406 888h1v1h-1zM423 888h1v1h-1zM441 888h1v1h-1zM458 888h1v1h-1zM476 888h1v1h-1zM493 888h1v1h-1zM511 888h1v1h-1zM529 888h1v1h-1zM546 888h1v1h-1zM564 888h1v1h-1zM581 888h1v1h-1zM599 888h1v1h-1zM616 888h1v1h-1zM634 888h1v1h-1zM651 888h1v1h-1zM669 888h1v1h-1zM686 888h1v1h-1zM704 888h1v1h-1zM722 888h1v1h-1zM739 888h1v1h-1zM757 888h1v1h-1zM774 888h1v1h-1zM792 888h1v1h-1zM2 906h1v1h-1zM20 906h1v1h-1zM37 906h1v1h-1zM55 906h1v1h-1zM72 906h1v1h-1zM90 906h1v1h-1zM107 906h1v1h-1zM125 906h1v1h-1zM142 906h1v1h-1zM160 906h1v1h-1zM178 906h1v1h-1zM195 906h1v1h-1zM213 906h1v1h-1zM230 906h1v1h-1zM248 906h1v1h-1zM265 906h1v1h-1zM283 906h1v1h-1zM300 906h1v1h-1zM318 906h1v1h-1zM335 906h1v1h-1zM353 906h1v1h-1zM371 906h1v1h-1zM388 906h1v1h-1zM406 906h1v1h-1zM423 906h1v1h-1zM441 906h1v1h-1zM458 906h1v1h-1zM476 906h1v1h-1zM493 906h1v1h-1zM511 906h1v1h-1zM529 906h1v1h-1zM546 906h1v1h-1zM564 906h1v1h-1zM581 906h1v1h-1zM599 906h1v1h-1zM616 906h1v1h-1zM634 906h1v1h-1zM651 906h1v1h-1zM669 906h1v1h-1zM686 906h1v1h-1zM704 906h1v1h-1zM722 906h1v1h-1zM739 906h1v1h-1zM757 906h1v1h-1zM774 906h1v1h-1zM792 906h1v1h-1zM2 923h1v1h-1zM20 923h1v1h-1zM37 923h1v1h-1zM55 923h1v1h-1zM72 923h1v1h-1zM90 923h1v1h-1zM107 923h1v1h-1zM125 923h1v1h-1zM142 923h1v1h-1zM160 923h1v1h-1zM178 923h1v1h-1zM195 923h1v1h-1zM213 923h1v1h-1zM230 923h1v1h-1zM248 923h1v1h-1zM265 923h1v1h-1zM283 923h1v1h-1zM300 923h1v1h-1zM318 923h1v1h-1zM335 923h1v1h-1zM353 923h1v1h-1zM371 923h1v1h-1zM388 923h1v1h-1zM406 923h1v1h-1zM423 923h1v1h-1zM441 923h1v1h-1zM458 923h1v1h-1zM476 923h1v1h-1zM493 923h1v1h-1zM511 923h1v1h-1zM529 923h1v1h-1zM546 923h1v1h-1zM564 923h1v1h-1zM581 923h1v1h-1zM599 923h1v1h-1zM616 923h1v1h-1zM634 923h1v1h-1zM651 923h1v1h-1zM669 923h1v1h-1zM686 923h1v1h-1zM704 923h1v1h-1zM722 923h1v1h-1zM739 923h1v1h-1zM757 923h1v1h-1zM774 923h1v1h-1zM792 923h1v1h-1zM2 941h1v1h-1zM20 941h1v1h-1zM37 941h1v1h-1zM55 941h1v1h-1zM72 941h1v1h-1zM90 941h1v1h-1zM107 941h1v1h-1zM125 941h1v1h-1zM142 941h1v1h-1zM160 941h1v1h-1zM178 941h1v1h-1zM195 941h1v1h-1zM213 941h1v1h-1zM230 941h1v1h-1zM248 941h1v1h-1zM265 941h1v1h-1zM283 941h1v1h-1zM300 941h1v1h-1zM318 941h1v1h-1zM335 941h1v1h-1zM353 941h1v1h-1zM371 941h1v1h-1zM388 941h1v1h-1zM406 941h1v1h-1zM423 941h1v1h-1zM441 941h1v1h-1zM458 941h1v1h-1zM476 941h1v1h-1zM493 941h1v1h-1zM511 941h1v1h-1zM529 941h1v1h-1zM546 941h1v1h-1zM564 941h1v1h-1zM581 941h1v1h-1zM599 941h1v1h-1zM616 941h1v1h-1zM634 941h1v1h-1zM651 941h1v1h-1zM669 941h1v1h-1zM686 941h1v1h-1zM704 941h1v1h-1zM722 941h1v1h-1zM739 941h1v1h-1zM757 941h1v1h-1zM774 941h1v1h-1zM792 941h1v1h-1z"/></svg>
<svg class="a" style="left:0;top:0" width="795" height="953" viewBox="0 0 795 953"><g stroke="#6b7280" stroke-width="2" fill="none"><path d="M413.5,343 C413.5,370.25 413.5,370.25 413.5,397.5"/><path d="M413.5,562 C413.5,589.65 290.6,589.65 290.6,617.3"/><path d="M413.5,562 C413.5,589.65 536,589.65 536,617.3"/><path d="M290.6,781 C290.6,808.8 413.4,808.8 413.4,836.6"/><path d="M536,676 C536,756.3 413.4,756.3 413.4,836.6"/></g></svg>
<div class="a" style="left:301px;top:178px;width:224.79999999999995px;height:165px;background:#1a1a1a;border:2px solid #05df72;border-radius:5px;box-sizing:border-box;"></div>
<div class="a" style="left:313.5px;top:190px;width:35.0px;height:35px;background:#1d2838;border-radius:9px;"></div>
<svg class="a" style="left:321.45px;top:197.95px;" width="19.6" height="19.6" viewBox="0 0 24 24" fill="none" stroke="#8b5cf6" stroke-width="1.9" stroke-linecap="round" stroke-linejoin="round"><path d="M15 21v-8a1 1 0 0 0-1-1h-4a1 1 0 0 0-1 1v8"/><path d="M3 10a2 2 0 0 1 .709-1.528l7-5.999a2 2 0 0 1 2.582 0l7 5.999A2 2 0 0 1 21 10v9a2 2 0 0 1-2 2H5a2 2 0 0 1-2-2z"/></svg>
<div class="t s" style="left:359.00px;top:192.04px;font-size:12px;line-height:15.6px;color:#fafafa;font-weight:700;letter-spacing:0.05px;">email_preprocessor</div>
<div class="t s" style="left:359.00px;top:209.54px;font-size:10.5px;line-height:13.65px;color:#9ca3af;letter-spacing:0.19px;">EmailPreprocessor</div>
<div class="t s" style="left:313.50px;top:236.54px;font-size:10.5px;line-height:13.65px;color:#05df72;font-weight:700;">Output:</div>
<div class="a" style="left:313.5px;top:253.5px;width:199.79999999999995px;height:70px;box-sizing:border-box;border:1px solid #0f5a2a;background:#121a15;border-radius:4px;overflow:hidden;">
<div class="t m" style="left:7.00px;top:8.15px;font-size:10.75px;line-height:13.97px;color:#d4d4d4;white-space:pre;">[</div>
<div class="t m" style="left:7.00px;top:22.15px;font-size:10.75px;line-height:13.97px;color:#d4d4d4;white-space:pre;">  {</div>
<div class="t m" style="left:7.00px;top:36.15px;font-size:10.75px;line-height:13.97px;color:#d4d4d4;white-space:pre;">    "original_message": "Hi</div>
<div class="t m" style="left:7.00px;top:50.15px;font-size:10.75px;line-height:13.97px;color:#d4d4d4;white-space:pre;">there, are you interested in</div>
<div class="t m" style="left:7.00px;top:64.15px;font-size:10.75px;line-height:13.97px;color:#d4d4d4;white-space:pre;">our new urgent offer today?</div>
</div>
<div class="a" style="left:409.9px;top:174.5px;width:7px;height:7px;border-radius:50%;background:#2a9d6e;"></div>
<div class="a" style="left:409.9px;top:339.5px;width:7px;height:7px;border-radius:50%;background:#2a9d6e;"></div>
<div class="a" style="left:301px;top:397.5px;width:224.79999999999995px;height:164.5px;background:#1a1a1a;border:2px solid #05df72;border-radius:5px;box-sizing:border-box;"></div>
<div class="a" style="left:313.5px;top:409.5px;width:35.0px;height:35.0px;background:#1d2838;border-radius:9px;"></div>
<svg class="a" style="left:321.45px;top:417.45px;" width="19.6" height="19.6" viewBox="0 0 24 24" fill="none" stroke="#99a1af" stroke-width="1.9" stroke-linecap="round" stroke-linejoin="round"><rect width="8" height="8" x="3" y="3" rx="2"/><path d="M7 11v4a2 2 0 0 0 2 2h4"/><rect width="8" height="8" x="13" y="13" rx="2"/></svg>
<div class="t s" style="left:359.00px;top:411.54px;font-size:12px;line-height:15.6px;color:#fafafa;font-weight:700;letter-spacing:0.05px;">spam_detector</div>
<div class="t s" style="left:359.00px;top:429.04px;font-size:10.5px;line-height:13.65px;color:#9ca3af;letter-spacing:0.19px;">SpamDetector</div>
<div class="t s" style="left:313.50px;top:456.04px;font-size:10.5px;line-height:13.65px;color:#05df72;font-weight:700;">Output:</div>
<div class="a" style="left:313.5px;top:473.0px;width:199.79999999999995px;height:70px;box-sizing:border-box;border:1px solid #0f5a2a;background:#121a15;border-radius:4px;overflow:hidden;">
<div class="t m" style="left:7.00px;top:8.15px;font-size:10.75px;line-height:13.97px;color:#d4d4d4;white-space:pre;">[</div>
<div class="t m" style="left:7.00px;top:22.15px;font-size:10.75px;line-height:13.97px;color:#d4d4d4;white-space:pre;">  {</div>
<div class="t m" style="left:7.00px;top:36.15px;font-size:10.75px;line-height:13.97px;color:#d4d4d4;white-space:pre;">    "email_content": {</div>
<div class="t m" style="left:7.00px;top:50.15px;font-size:10.75px;line-height:13.97px;color:#d4d4d4;white-space:pre;">      "original_message":</div>
<div class="t m" style="left:7.00px;top:64.15px;font-size:10.75px;line-height:13.97px;color:#d4d4d4;white-space:pre;">"Hi there, are you</div>
</div>
<div class="a" style="left:409.9px;top:394.0px;width:7px;height:7px;border-radius:50%;background:#2a9d6e;"></div>
<div class="a" style="left:409.9px;top:558.5px;width:7px;height:7px;border-radius:50%;background:#2a9d6e;"></div>
<div class="a" style="left:178.8px;top:617.3px;width:223.7px;height:163.70000000000005px;background:#1a1a1a;border:2px solid #05df72;border-radius:5px;box-sizing:border-box;"></div>
<div class="a" style="left:191.3px;top:629.3px;width:35.0px;height:35.0px;background:#1d2838;border-radius:9px;"></div>
<svg class="a" style="left:199.25px;top:637.25px;" width="19.6" height="19.6" viewBox="0 0 24 24" fill="none" stroke="#99a1af" stroke-width="1.9" stroke-linecap="round" stroke-linejoin="round"><rect width="8" height="8" x="3" y="3" rx="2"/><path d="M7 11v4a2 2 0 0 0 2 2h4"/><rect width="8" height="8" x="13" y="13" rx="2"/></svg>
<div class="t s" style="left:236.80px;top:631.34px;font-size:12px;line-height:15.6px;color:#fafafa;font-weight:700;letter-spacing:0.05px;">spam_handler</div>
<div class="t s" style="left:236.80px;top:648.84px;font-size:10.5px;line-height:13.65px;color:#9ca3af;letter-spacing:0.19px;">SpamHandler</div>
<div class="t s" style="left:191.30px;top:675.84px;font-size:10.5px;line-height:13.65px;color:#05df72;font-weight:700;">Output:</div>
<div class="a" style="left:191.3px;top:692.8px;width:198.7px;height:70px;box-sizing:border-box;border:1px solid #0f5a2a;background:#121a15;border-radius:4px;overflow:hidden;">
<div class="t m" style="left:7.00px;top:8.15px;font-size:10.75px;line-height:13.97px;color:#d4d4d4;white-space:pre;">[</div>
<div class="t m" style="left:7.00px;top:22.15px;font-size:10.75px;line-height:13.97px;color:#d4d4d4;white-space:pre;">  {</div>
<div class="t m" style="left:7.00px;top:36.15px;font-size:10.75px;line-height:13.97px;color:#d4d4d4;white-space:pre;">    "original_message": "Hi</div>
<div class="t m" style="left:7.00px;top:50.15px;font-size:10.75px;line-height:13.97px;color:#d4d4d4;white-space:pre;">there, are you interested in</div>
<div class="t m" style="left:7.00px;top:64.15px;font-size:10.75px;line-height:13.97px;color:#d4d4d4;white-space:pre;">our new urgent offer today?</div>
</div>
<div class="a" style="left:287.15px;top:613.8px;width:7px;height:7px;border-radius:50%;background:#2a9d6e;"></div>
<div class="a" style="left:287.15px;top:777.5px;width:7px;height:7px;border-radius:50%;background:#2a9d6e;"></div>
<div class="a" style="left:424.2px;top:617.3px;width:224.40000000000003px;height:58.700000000000045px;background:#1a1a1a;border:2px solid #4a5565;border-radius:5px;box-sizing:border-box;"></div>
<div class="a" style="left:436.7px;top:629.3px;width:35.0px;height:35.0px;background:#1d2838;border-radius:9px;"></div>
<svg class="a" style="left:444.65px;top:637.25px;" width="19.6" height="19.6" viewBox="0 0 24 24" fill="none" stroke="#99a1af" stroke-width="1.9" stroke-linecap="round" stroke-linejoin="round"><rect width="8" height="8" x="3" y="3" rx="2"/><path d="M7 11v4a2 2 0 0 0 2 2h4"/><rect width="8" height="8" x="13" y="13" rx="2"/></svg>
<div class="t s" style="left:482.20px;top:631.34px;font-size:12px;line-height:15.6px;color:#fafafa;font-weight:700;letter-spacing:0.05px;">legitimate_message_ha...</div>
<div class="t s" style="left:482.20px;top:648.84px;font-size:10.5px;line-height:13.65px;color:#9ca3af;letter-spacing:0.19px;">LegitimateMessageHandler</div>
<div class="a" style="left:532.9px;top:613.8px;width:7px;height:7px;border-radius:50%;background:#6b7280;"></div>
<div class="a" style="left:532.9px;top:672.5px;width:7px;height:7px;border-radius:50%;background:#6b7280;"></div>
<div class="a" style="left:301px;top:836.6px;width:224.79999999999995px;height:58.39999999999998px;background:#1a1a1a;border:2px solid #05df72;border-radius:5px;box-sizing:border-box;"></div>
<div class="a" style="left:313.5px;top:848.6px;width:35.0px;height:35.0px;background:#1d2838;border-radius:9px;"></div>
<svg class="a" style="left:321.45px;top:856.5500000000001px;" width="19.6" height="19.6" viewBox="0 0 24 24" fill="none" stroke="#99a1af" stroke-width="1.9" stroke-linecap="round" stroke-linejoin="round"><rect width="8" height="8" x="3" y="3" rx="2"/><path d="M7 11v4a2 2 0 0 0 2 2h4"/><rect width="8" height="8" x="13" y="13" rx="2"/></svg>
<div class="t s" style="left:359.00px;top:850.64px;font-size:12px;line-height:15.6px;color:#fafafa;font-weight:700;letter-spacing:0.05px;">final_processor</div>
<div class="t s" style="left:359.00px;top:868.14px;font-size:10.5px;line-height:13.65px;color:#9ca3af;letter-spacing:0.19px;">FinalProcessor</div>
<div class="a" style="left:409.9px;top:833.1px;width:7px;height:7px;border-radius:50%;background:#2a9d6e;"></div>
<div class="a" style="left:409.9px;top:891.5px;width:7px;height:7px;border-radius:50%;background:#2a9d6e;"></div>
<div class="a" style="left:747px;top:167px;width:32px;height:32px;background:#1e293b;border:1px solid #334155;border-radius:8px;box-sizing:border-box;"></div>
<div class="a" style="left:761.7px;top:177.0px;width:2.6px;height:2.6px;border-radius:50%;background:#fafafa;"></div>
<div class="a" style="left:761.7px;top:181.7px;width:2.6px;height:2.6px;border-radius:50%;background:#fafafa;"></div>
<div class="a" style="left:761.7px;top:186.39999999999998px;width:2.6px;height:2.6px;border-radius:50%;background:#fafafa;"></div>
<div class="a" style="left:14px;top:864px;width:28px;height:80px;background:#1e293b;border:1px solid #3b4758;border-radius:3px;box-sizing:border-box;"></div>
<div class="a" style="left:15px;top:890px;width:26px;height:1px;background:#3b4758;"></div>
<div class="a" style="left:15px;top:916px;width:26px;height:1px;background:#3b4758;"></div>
<svg class="a" style="left:20px;top:870px;" width="16" height="16" viewBox="0 0 24 24" fill="none" stroke="#e5e5e5" stroke-width="2.2" stroke-linecap="round" stroke-linejoin="round"><path d="M5 12h14"/><path d="M12 5v14"/></svg>
<div class="a" style="left:22px;top:902.5px;width:12px;height:1.5px;background:#e5e5e5;"></div>
<svg class="a" style="left:22px;top:924px" width="12" height="11" viewBox="0 0 12 11" fill="none" stroke="#e5e5e5" stroke-width="1.4"><path d="M0.7 3.5V1.5A0.8 0.8 0 0 1 1.5 0.7H3.5M8.5 0.7H10.5A0.8 0.8 0 0 1 11.3 1.5V3.5M11.3 7.5V9.5A0.8 0.8 0 0 1 10.5 10.3H8.5M3.5 10.3H1.5A0.8 0.8 0 0 1 0.7 9.5V7.5"/></svg>
<div class="a" style="left:795px;top:151px;width:1px;height:802px;background:#262626;"></div>
<div class="t s" style="left:804.50px;top:166.75px;font-size:14px;line-height:18.2px;color:#fafafa;font-weight:700;letter-spacing:-0.24px;">Execution Timeline</div>
<div class="a" style="left:936px;top:164.8px;width:30px;height:20.19999999999999px;background:#8b6af4;border-radius:10px;"></div>
<div class="t s" style="left:944.30px;top:167.74px;font-size:11.5px;line-height:14.95px;color:#fafafa;font-weight:700;">25</div>
<svg class="a" style="left:1210px;top:165px;" width="20" height="20" viewBox="0 0 24 24" fill="none" stroke="#fafafa" stroke-width="1.8" stroke-linecap="round" stroke-linejoin="round"><path d="m9 18 6-6-6-6"/></svg>
<div class="a" style="left:796px;top:199px;width:447px;height:1px;background:#262626;"></div>
<div class="a" style="left:796px;top:200px;width:1px;height:753px;background:#262626;"></div>
<div class="t s" style="left:809.40px;top:217.45px;font-size:14px;line-height:18.2px;color:#fafafa;font-weight:700;letter-spacing:-0.24px;">Execution Timeline</div>
<div class="a" style="left:941px;top:215px;width:30px;height:22px;border:1px solid #262626;border-radius:7px;box-sizing:border-box;"></div>
<div class="t s" style="left:952.50px;top:217.54px;font-size:12.5px;line-height:16.25px;color:#fafafa;font-weight:700;">5</div>
<svg class="a" style="left:1147.9px;top:217.9px;" width="16" height="16" viewBox="0 0 24 24" fill="none" stroke="#fafafa" stroke-width="2.1" stroke-linecap="round" stroke-linejoin="round"><rect width="14" height="14" x="8" y="8" rx="2" ry="2"/><path d="M4 16c-1.1 0-2-.9-2-2V4c0-1.1.9-2 2-2h10c1.1 0 2 .9 2 2"/></svg>
<div class="t s" style="left:1174.50px;top:218.24px;font-size:12.5px;line-height:16.25px;color:#fafafa;font-weight:700;letter-spacing:-0.4px;">Copy All</div>
<div class="a" style="left:797px;top:252px;width:446px;height:1px;background:#262626;"></div>
<div class="a" style="left:797px;top:253px;width:446px;height:645px;background:#121212;"></div>
<div class="a" style="left:809px;top:265px;width:423px;height:72px;border:1px solid #262626;border-radius:10px;box-sizing:border-box;"></div>
<svg class="a" style="left:841.6px;top:279.7px;" width="17" height="17" viewBox="0 0 24 24" fill="none" stroke="#05df72" stroke-width="2.1" stroke-linecap="round" stroke-linejoin="round"><path d="M21.801 10A10 10 0 1 1 17 3.335"/><path d="m9 11 3 3L22 4"/></svg>
<div class="t s" style="left:866.20px;top:279.55px;font-size:14px;line-height:18.2px;color:#fafafa;font-weight:700;letter-spacing:-0.11px;">email_preprocessor</div>
<div class="t m" style="left:842.40px;top:307.47px;font-size:12.25px;line-height:15.93px;color:#a3a3a3;">10:57:28 AM</div>
<div class="a" style="left:932px;top:302px;width:84px;height:22px;background:#0f2617;border:1px solid #14532d;border-radius:8px;box-sizing:border-box;"></div>
<div class="t s" style="left:942.40px;top:304.54px;font-size:12.5px;line-height:16.25px;color:#05df72;font-weight:700;letter-spacing:0.05px;">completed</div>
<div class="a" style="left:809px;top:345px;width:423px;height:72px;border:1px solid #262626;border-radius:10px;box-sizing:border-box;"></div>
<svg class="a" style="left:841.6px;top:359.7px;" width="17" height="17" viewBox="0 0 24 24" fill="none" stroke="#05df72" stroke-width="2.1" stroke-linecap="round" stroke-linejoin="round"><path d="M21.801 10A10 10 0 1 1 17 3.335"/><path d="m9 11 3 3L22 4"/></svg>
<div class="t s" style="left:866.20px;top:359.55px;font-size:14px;line-height:18.2px;color:#fafafa;font-weight:700;letter-spacing:-0.11px;">spam_detector</div>
<div class="t m" style="left:842.40px;top:387.47px;font-size:12.25px;line-height:15.93px;color:#a3a3a3;">10:57:31 AM</div>
<div class="a" style="left:932px;top:382px;width:84px;height:22px;background:#0f2617;border:1px solid #14532d;border-radius:8px;box-sizing:border-box;"></div>
<div class="t s" style="left:942.40px;top:384.54px;font-size:12.5px;line-height:16.25px;color:#05df72;font-weight:700;letter-spacing:0.05px;">completed</div>
<div class="a" style="left:809px;top:425px;width:423px;height:74px;border:1px solid #262626;border-radius:10px;box-sizing:border-box;"></div>
<svg class="a" style="left:841.6px;top:440.7px;" width="17" height="17" viewBox="0 0 24 24" fill="none" stroke="#05df72" stroke-width="2.1" stroke-linecap="round" stroke-linejoin="round"><path d="M21.801 10A10 10 0 1 1 17 3.335"/><path d="m9 11 3 3L22 4"/></svg>
<div class="t s" style="left:866.20px;top:440.55px;font-size:14px;line-height:18.2px;color:#fafafa;font-weight:700;letter-spacing:-0.11px;">spam_detector</div>
<div class="t m" style="left:842.40px;top:468.47px;font-size:12.25px;line-height:15.93px;color:#a3a3a3;">10:57:41 AM</div>
<div class="a" style="left:932px;top:463px;width:84px;height:22px;background:#0f2617;border:1px solid #14532d;border-radius:8px;box-sizing:border-box;"></div>
<div class="t s" style="left:942.40px;top:465.54px;font-size:12.5px;line-height:16.25px;color:#05df72;font-weight:700;letter-spacing:0.05px;">completed</div>
<div class="a" style="left:1155.3px;top:438px;width:64.0px;height:21.5px;border:1px solid #262626;border-radius:8px;box-sizing:border-box;"></div>
<div class="t s" style="left:1166.50px;top:441.04px;font-size:12.5px;line-height:16.25px;color:#fafafa;font-weight:700;letter-spacing:-0.1px;">Run #2</div>
<div class="a" style="left:809px;top:507px;width:423px;height:72px;border:1px solid #262626;border-radius:10px;box-sizing:border-box;"></div>
<svg class="a" style="left:841.6px;top:521.7px;" width="17" height="17" viewBox="0 0 24 24" fill="none" stroke="#05df72" stroke-width="2.1" stroke-linecap="round" stroke-linejoin="round"><path d="M21.801 10A10 10 0 1 1 17 3.335"/><path d="m9 11 3 3L22 4"/></svg>
<div class="t s" style="left:866.20px;top:521.55px;font-size:14px;line-height:18.2px;color:#fafafa;font-weight:700;letter-spacing:-0.11px;">spam_handler</div>
<div class="t m" style="left:842.40px;top:549.47px;font-size:12.25px;line-height:15.93px;color:#a3a3a3;">10:57:45 AM</div>
<div class="a" style="left:932px;top:544px;width:84px;height:22px;background:#0f2617;border:1px solid #14532d;border-radius:8px;box-sizing:border-box;"></div>
<div class="t s" style="left:942.40px;top:546.54px;font-size:12.5px;line-height:16.25px;color:#05df72;font-weight:700;letter-spacing:0.05px;">completed</div>
<div class="a" style="left:809px;top:587px;width:423px;height:72px;border:1px solid #262626;border-radius:10px;box-sizing:border-box;"></div>
<svg class="a" style="left:841.6px;top:601.7px;" width="17" height="17" viewBox="0 0 24 24" fill="none" stroke="#05df72" stroke-width="2.1" stroke-linecap="round" stroke-linejoin="round"><path d="M21.801 10A10 10 0 1 1 17 3.335"/><path d="m9 11 3 3L22 4"/></svg>
<div class="t s" style="left:866.20px;top:601.55px;font-size:14px;line-height:18.2px;color:#fafafa;font-weight:700;letter-spacing:-0.11px;">final_processor</div>
<div class="t m" style="left:842.40px;top:629.47px;font-size:12.25px;line-height:15.93px;color:#a3a3a3;">10:57:49 AM</div>
<div class="a" style="left:932px;top:624px;width:84px;height:22px;background:#0f2617;border:1px solid #14532d;border-radius:8px;box-sizing:border-box;"></div>
<div class="t s" style="left:942.40px;top:626.54px;font-size:12.5px;line-height:16.25px;color:#05df72;font-weight:700;letter-spacing:0.05px;">completed</div>
<div class="a" style="left:809px;top:667px;width:423px;height:218px;box-sizing:border-box;border:1px solid #12702f;border-radius:10px;background:#18221c;overflow:hidden;"></div>
<div class="a" style="left:810px;top:668px;width:421px;height:48px;background:#10331f;border-bottom:1px solid #12702f;border-radius:9px 9px 0 0;"></div>
<svg class="a" style="left:821.1px;top:681px;" width="18" height="18" viewBox="0 0 24 24" fill="none" stroke="#05df72" stroke-width="2" stroke-linecap="round" stroke-linejoin="round"><path d="M21.801 10A10 10 0 1 1 17 3.335"/><path d="m9 11 3 3L22 4"/></svg>
<div class="t s" style="left:846.60px;top:680.65px;font-size:14px;line-height:18.2px;color:#fafafa;font-weight:700;letter-spacing:-0.11px;">Workflow Complete</div>
<div class="t s" style="left:822.60px;top:725.44px;font-size:12.5px;line-height:16.25px;color:#a3a3a3;letter-spacing:0.19px;">Final Output:</div>
<div class="a" style="left:810px;top:717px;width:421px;height:1px;background:#2a2a2a;"></div>
<div class="a" style="left:823px;top:747px;width:395px;height:129px;background:#0a0a0a;border:1px solid #262626;border-radius:5px;box-sizing:border-box;"></div>
<div class="t m" style="left:831.50px;top:756.77px;font-size:12.25px;line-height:15.93px;color:#fafafa;white-space:pre;">Email classified as SPAM (human-verified).</div>
<div class="t m" style="left:831.50px;top:772.77px;font-size:12.25px;line-height:15.93px;color:#fafafa;white-space:pre;">AI detected: SPAM (confidence: 0.70)</div>
<div class="t m" style="left:831.50px;top:788.77px;font-size:12.25px;line-height:15.93px;color:#fafafa;white-space:pre;">Human reviewer: spam</div>
<div class="t m" style="left:831.50px;top:804.77px;font-size:12.25px;line-height:15.93px;color:#fafafa;white-space:pre;">Spam indicators: spam_keywords: ['offer', 'click he</div>
<div class="t m" style="left:831.50px;top:820.77px;font-size:12.25px;line-height:15.93px;color:#fafafa;white-space:pre;">re', 'urgent'], suspicious_patterns</div>
<div class="t m" style="left:831.50px;top:836.77px;font-size:12.25px;line-height:15.93px;color:#fafafa;white-space:pre;">Action: Message quarantined for review</div>
<div class="t m" style="left:831.50px;top:852.77px;font-size:12.25px;line-height:15.93px;color:#fafafa;white-space:pre;">Processing time: 3.7s</div>
<div class="a" style="left:797px;top:898px;width:446px;height:1px;background:#262626;"></div>
<div class="a" style="left:809px;top:911px;width:423px;height:36px;background:#8b6af4;border-radius:8px;"></div>
<div class="a" style="left:1191.5px;top:911px;width:1.0px;height:36px;background:#8462ec;"></div>
<svg class="a" style="left:954px;top:920px;" width="18" height="18" viewBox="0 0 24 24" fill="none" stroke="#fafafa" stroke-width="2" stroke-linecap="round" stroke-linejoin="round"><polygon points="6 3 20 12 6 21 6 3"/></svg>
<div class="t s" style="left:979.00px;top:919.85px;font-size:14px;line-height:18.2px;color:#fafafa;font-weight:700;letter-spacing:-0.39px;">Run Again</div>
<svg class="a" style="left:1202px;top:918.6px;" width="16.7" height="16.7" viewBox="0 0 24 24" fill="none" stroke="#fafafa" stroke-width="2" stroke-linecap="round" stroke-linejoin="round"><path d="m6 9 6 6 6-6"/></svg>
<div class="a" style="left:1243px;top:58px;width:5px;height:895px;background:#1f1f1f;"></div>
<div class="a" style="left:1243px;top:485px;width:4px;height:47px;background:#4a4468;border-radius:2px;"></div>
<div class="a" style="left:1260px;top:70px;width:255px;height:36px;background:#262626;border-radius:10px;"></div>
<div class="a" style="left:1264px;top:74px;width:82px;height:28px;background:#0a0a0a;border-radius:7px;"></div>
<div class="t s" style="left:1283.80px;top:78.75px;font-size:14px;line-height:18.2px;color:#fafafa;font-weight:700;letter-spacing:-0.48px;">Events</div>
<div class="t s" style="left:1366.20px;top:78.75px;font-size:14px;line-height:18.2px;color:#a3a3a3;letter-spacing:0.12px;">Traces</div>
<div class="t s" style="left:1452.60px;top:78.75px;font-size:14px;line-height:18.2px;color:#a3a3a3;letter-spacing:0.3px;">Tools</div>
<svg class="a" style="left:1530.8px;top:80.6px;" width="15.3" height="15.3" viewBox="0 0 24 24" fill="none" stroke="#fafafa" stroke-width="2.1" stroke-linecap="round" stroke-linejoin="round"><path d="m9 18 6-6-6-6"/></svg>
<svg class="a" style="left:1259.8px;top:122px;" width="16.1" height="16.1" viewBox="0 0 24 24" fill="none" stroke="#fafafa" stroke-width="2" stroke-linecap="round" stroke-linejoin="round"><path d="M22 12h-2.48a2 2 0 0 0-1.93 1.46l-2.35 8.36a.25.25 0 0 1-.48 0L9.24 2.18a.25.25 0 0 0-.48 0l-2.35 8.36A2 2 0 0 1 4.49 12H2"/></svg>
<div class="t s" style="left:1284.40px;top:120.95px;font-size:15.7px;line-height:20.41px;color:#fafafa;font-weight:700;letter-spacing:-0.5px;">Events</div>
<div class="a" style="left:1342px;top:119px;width:90.5px;height:22px;border:1px solid #262626;border-radius:7px;box-sizing:border-box;"></div>
<div class="t s" style="left:1352.60px;top:121.84px;font-size:12.5px;line-height:16.25px;color:#fafafa;font-weight:700;letter-spacing:0.37px;">26 (46 raw)</div>
<div class="a" style="left:1248px;top:154px;width:316px;height:1px;background:#262626;"></div>
<div class="a" style="left:1248px;top:155px;width:316px;height:747px;overflow:hidden;">
<div class="a" style="left:12px;top:12px;width:2px;height:58px;background:#2a2a2a;"></div>
<svg class="a" style="left:25.15000000000009px;top:22.44999999999999px;" width="13.8" height="13.8" viewBox="0 0 24 24" fill="none" stroke="#00c950" stroke-width="2.2" stroke-linecap="round" stroke-linejoin="round"><circle cx="12" cy="12" r="10"/><path d="m9 12 2 2 4-4"/></svg>
<div class="t m" style="left:46.50px;top:23.27px;font-size:12.25px;line-height:15.93px;color:#a3a3a3;">10:58:11 AM</div>
<div class="a" style="left:136.4000000000001px;top:20.19999999999999px;width:83.0px;height:17.5px;border:1px solid #262626;border-radius:9px;box-sizing:border-box;"></div>
<div class="t s" style="left:146.50px;top:20.84px;font-size:12.5px;line-height:16.25px;color:#fafafa;font-weight:700;letter-spacing:0.05px;">completed</div>
<svg class="a" style="left:24.09999999999991px;top:44.900000000000006px;" width="15" height="15" viewBox="0 0 24 24" fill="none" stroke="#a3a3a3" stroke-width="1.8" stroke-linecap="round" stroke-linejoin="round"><path d="m9 18 6-6-6-6"/></svg>
<div class="t s" style="left:46.50px;top:43.15px;font-size:14px;line-height:18.2px;color:#a3a3a3;letter-spacing:0.24px;">Response complete (34 tokens)</div>
<div class="a" style="left:12px;top:78px;width:2px;height:72px;background:#2a2a2a;"></div>
<svg class="a" style="left:25.200000000000045px;top:95.5px;" width="12.5" height="12.5" viewBox="0 0 24 24" fill="none" stroke="#a855f7" stroke-width="2" stroke-linecap="round" stroke-linejoin="round"><path d="M22 12h-2.48a2 2 0 0 0-1.93 1.46l-2.35 8.36a.25.25 0 0 1-.48 0L9.24 2.18a.25.25 0 0 0-.48 0l-2.35 8.36A2 2 0 0 1 4.49 12H2"/></svg>
<div class="t m" style="left:44.90px;top:87.97px;font-size:12.25px;line-height:15.93px;color:#a3a3a3;">10:58:08</div>
<div class="t m" style="left:44.90px;top:103.57px;font-size:12.25px;line-height:15.93px;color:#a3a3a3;">AM</div>
<div class="a" style="left:126.20000000000005px;top:93px;width:180.70000000000005px;height:17.5px;border:1px solid #262626;border-radius:9px;box-sizing:border-box;"></div>
<div class="t s" style="left:137.00px;top:93.84px;font-size:12.5px;line-height:16.25px;color:#fafafa;font-weight:700;letter-spacing:-0.05px;">workflow_event.completed</div>
<svg class="a" style="left:24.09999999999991px;top:124.5px;" width="15" height="15" viewBox="0 0 24 24" fill="none" stroke="#a3a3a3" stroke-width="1.8" stroke-linecap="round" stroke-linejoin="round"><path d="m9 18 6-6-6-6"/></svg>
<div class="t s" style="left:46.50px;top:122.95px;font-size:14px;line-height:18.2px;color:#a3a3a3;letter-spacing:0.24px;">Executor: unknown</div>
<div class="a" style="left:12px;top:158px;width:2px;height:58px;background:#2a2a2a;"></div>
<svg class="a" style="left:25.15000000000009px;top:168.45px;" width="13.8" height="13.8" viewBox="0 0 24 24" fill="none" stroke="#6a7282" stroke-width="2.2" stroke-linecap="round" stroke-linejoin="round"><circle cx="12" cy="12" r="10"/><line x1="12" x2="12" y1="8" y2="12"/><line x1="12" x2="12.01" y1="16" y2="16"/></svg>
<div class="t m" style="left:46.50px;top:169.27px;font-size:12.25px;line-height:15.93px;color:#a3a3a3;">10:58:07 AM</div>
<div class="a" style="left:136.4000000000001px;top:166.2px;width:126.29999999999995px;height:17.5px;border:1px solid #262626;border-radius:9px;box-sizing:border-box;"></div>
<div class="t s" style="left:146.50px;top:166.84px;font-size:12.5px;line-height:16.25px;color:#fafafa;font-weight:700;letter-spacing:0.05px;">output_item.done</div>
<div class="t s" style="left:26.20px;top:189.55px;font-size:14px;line-height:18.2px;color:#a3a3a3;letter-spacing:0.24px;">response.output_item.done</div>
<div class="a" style="left:12px;top:224px;width:2px;height:58px;background:#2a2a2a;"></div>
<svg class="a" style="left:25.15000000000009px;top:234.45px;" width="13.8" height="13.8" viewBox="0 0 24 24" fill="none" stroke="#00c950" stroke-width="2.2" stroke-linecap="round" stroke-linejoin="round"><circle cx="12" cy="12" r="10"/><path d="m9 12 2 2 4-4"/></svg>
<div class="t m" style="left:46.50px;top:235.27px;font-size:12.25px;line-height:15.93px;color:#a3a3a3;">10:58:06 AM</div>
<div class="a" style="left:136.4000000000001px;top:232.2px;width:134.0px;height:17.5px;border:1px solid #262626;border-radius:9px;box-sizing:border-box;"></div>
<div class="t s" style="left:146.50px;top:232.84px;font-size:12.5px;line-height:16.25px;color:#fafafa;font-weight:700;letter-spacing:0.05px;">output_item.added</div>
<div class="t s" style="left:26.20px;top:255.55px;font-size:14px;line-height:18.2px;color:#a3a3a3;letter-spacing:0.24px;">Output item added</div>
<div class="a" style="left:12px;top:290px;width:2px;height:58px;background:#2a2a2a;"></div>
<svg class="a" style="left:25.15000000000009px;top:300.45px;" width="13.8" height="13.8" viewBox="0 0 24 24" fill="none" stroke="#00c950" stroke-width="2.2" stroke-linecap="round" stroke-linejoin="round"><circle cx="12" cy="12" r="10"/><path d="m9 12 2 2 4-4"/></svg>
<div class="t m" style="left:46.50px;top:301.27px;font-size:12.25px;line-height:15.93px;color:#a3a3a3;">10:58:04 AM</div>
<div class="a" style="left:136.4000000000001px;top:298.2px;width:134.0px;height:17.5px;border:1px solid #262626;border-radius:9px;box-sizing:border-box;"></div>
<div class="t s" style="left:146.50px;top:298.84px;font-size:12.5px;line-height:16.25px;color:#fafafa;font-weight:700;letter-spacing:0.05px;">output_item.added</div>
<div class="t s" style="left:26.20px;top:321.55px;font-size:14px;line-height:18.2px;color:#a3a3a3;letter-spacing:0.24px;">Output item added</div>
<div class="a" style="left:12px;top:356px;width:2px;height:72px;background:#2a2a2a;"></div>
<svg class="a" style="left:25.200000000000045px;top:373.5px;" width="12.5" height="12.5" viewBox="0 0 24 24" fill="none" stroke="#a855f7" stroke-width="2" stroke-linecap="round" stroke-linejoin="round"><path d="M22 12h-2.48a2 2 0 0 0-1.93 1.46l-2.35 8.36a.25.25 0 0 1-.48 0L9.24 2.18a.25.25 0 0 0-.48 0l-2.35 8.36A2 2 0 0 1 4.49 12H2"/></svg>
<div class="t m" style="left:44.90px;top:365.97px;font-size:12.25px;line-height:15.93px;color:#a3a3a3;">10:58:02</div>
<div class="t m" style="left:44.90px;top:381.57px;font-size:12.25px;line-height:15.93px;color:#a3a3a3;">AM</div>
<div class="a" style="left:126.20000000000005px;top:371px;width:180.70000000000005px;height:17.5px;border:1px solid #262626;border-radius:9px;box-sizing:border-box;"></div>
<div class="t s" style="left:137.00px;top:371.84px;font-size:12.5px;line-height:16.25px;color:#fafafa;font-weight:700;letter-spacing:-0.05px;">workflow_event.completed</div>
<svg class="a" style="left:24.09999999999991px;top:402.5px;" width="15" height="15" viewBox="0 0 24 24" fill="none" stroke="#a3a3a3" stroke-width="1.8" stroke-linecap="round" stroke-linejoin="round"><path d="m9 18 6-6-6-6"/></svg>
<div class="t s" style="left:46.50px;top:400.95px;font-size:14px;line-height:18.2px;color:#a3a3a3;letter-spacing:0.24px;">Executor: unknown</div>
<div class="a" style="left:12px;top:436px;width:2px;height:72px;background:#2a2a2a;"></div>
<svg class="a" style="left:25.200000000000045px;top:453.5px;" width="12.5" height="12.5" viewBox="0 0 24 24" fill="none" stroke="#a855f7" stroke-width="2" stroke-linecap="round" stroke-linejoin="round"><path d="M22 12h-2.48a2 2 0 0 0-1.93 1.46l-2.35 8.36a.25.25 0 0 1-.48 0L9.24 2.18a.25.25 0 0 0-.48 0l-2.35 8.36A2 2 0 0 1 4.49 12H2"/></svg>
<div class="t m" style="left:44.90px;top:445.97px;font-size:12.25px;line-height:15.93px;color:#a3a3a3;">10:58:01</div>
<div class="t m" style="left:44.90px;top:461.57px;font-size:12.25px;line-height:15.93px;color:#a3a3a3;">AM</div>
<div class="a" style="left:126.20000000000005px;top:451px;width:180.70000000000005px;height:17.5px;border:1px solid #262626;border-radius:9px;box-sizing:border-box;"></div>
<div class="t s" style="left:137.00px;top:451.84px;font-size:12.5px;line-height:16.25px;color:#fafafa;font-weight:700;letter-spacing:-0.05px;">workflow_event.completed</div>
<svg class="a" style="left:24.09999999999991px;top:482.5px;" width="15" height="15" viewBox="0 0 24 24" fill="none" stroke="#a3a3a3" stroke-width="1.8" stroke-linecap="round" stroke-linejoin="round"><path d="m9 18 6-6-6-6"/></svg>
<div class="t s" style="left:46.50px;top:480.95px;font-size:14px;line-height:18.2px;color:#a3a3a3;letter-spacing:0.24px;">Executor: unknown</div>
<div class="a" style="left:12px;top:516px;width:2px;height:58px;background:#2a2a2a;"></div>
<svg class="a" style="left:25.15000000000009px;top:526.45px;" width="13.8" height="13.8" viewBox="0 0 24 24" fill="none" stroke="#6a7282" stroke-width="2.2" stroke-linecap="round" stroke-linejoin="round"><circle cx="12" cy="12" r="10"/><line x1="12" x2="12" y1="8" y2="12"/><line x1="12" x2="12.01" y1="16" y2="16"/></svg>
<div class="t m" style="left:46.50px;top:527.27px;font-size:12.25px;line-height:15.93px;color:#a3a3a3;">10:58:00 AM</div>
<div class="a" style="left:136.4000000000001px;top:524.2px;width:126.29999999999995px;height:17.5px;border:1px solid #262626;border-radius:9px;box-sizing:border-box;"></div>
<div class="t s" style="left:146.50px;top:524.84px;font-size:12.5px;line-height:16.25px;color:#fafafa;font-weight:700;letter-spacing:0.05px;">output_item.done</div>
<div class="t s" style="left:26.20px;top:547.55px;font-size:14px;line-height:18.2px;color:#a3a3a3;letter-spacing:0.24px;">response.output_item.done</div>
<div class="a" style="left:12px;top:582px;width:2px;height:58px;background:#2a2a2a;"></div>
<svg class="a" style="left:25.15000000000009px;top:592.45px;" width="13.8" height="13.8" viewBox="0 0 24 24" fill="none" stroke="#00c950" stroke-width="2.2" stroke-linecap="round" stroke-linejoin="round"><circle cx="12" cy="12" r="10"/><path d="m9 12 2 2 4-4"/></svg>
<div class="t m" style="left:46.50px;top:593.27px;font-size:12.25px;line-height:15.93px;color:#a3a3a3;">10:57:57 AM</div>
<div class="a" style="left:136.4000000000001px;top:590.2px;width:134.0px;height:17.5px;border:1px solid #262626;border-radius:9px;box-sizing:border-box;"></div>
<div class="t s" style="left:146.50px;top:590.84px;font-size:12.5px;line-height:16.25px;color:#fafafa;font-weight:700;letter-spacing:0.05px;">output_item.added</div>
<div class="t s" style="left:26.20px;top:613.55px;font-size:14px;line-height:18.2px;color:#a3a3a3;letter-spacing:0.24px;">Output item added</div>
<div class="a" style="left:12px;top:648px;width:2px;height:72px;background:#2a2a2a;"></div>
<svg class="a" style="left:25.200000000000045px;top:665.5px;" width="12.5" height="12.5" viewBox="0 0 24 24" fill="none" stroke="#a855f7" stroke-width="2" stroke-linecap="round" stroke-linejoin="round"><path d="M22 12h-2.48a2 2 0 0 0-1.93 1.46l-2.35 8.36a.25.25 0 0 1-.48 0L9.24 2.18a.25.25 0 0 0-.48 0l-2.35 8.36A2 2 0 0 1 4.49 12H2"/></svg>
<div class="t m" style="left:44.90px;top:657.97px;font-size:12.25px;line-height:15.93px;color:#a3a3a3;">10:57:55</div>
<div class="t m" style="left:44.90px;top:673.57px;font-size:12.25px;line-height:15.93px;color:#a3a3a3;">AM</div>
<div class="a" style="left:126.20000000000005px;top:663px;width:180.70000000000005px;height:17.5px;border:1px solid #262626;border-radius:9px;box-sizing:border-box;"></div>
<div class="t s" style="left:137.00px;top:663.84px;font-size:12.5px;line-height:16.25px;color:#fafafa;font-weight:700;letter-spacing:-0.05px;">workflow_event.completed</div>
<svg class="a" style="left:24.09999999999991px;top:694.5px;" width="15" height="15" viewBox="0 0 24 24" fill="none" stroke="#a3a3a3" stroke-width="1.8" stroke-linecap="round" stroke-linejoin="round"><path d="m9 18 6-6-6-6"/></svg>
<div class="t s" style="left:46.50px;top:692.95px;font-size:14px;line-height:18.2px;color:#a3a3a3;letter-spacing:0.24px;">Executor: unknown</div>
<div class="a" style="left:12px;top:728px;width:2px;height:72px;background:#2a2a2a;"></div>
<svg class="a" style="left:25.200000000000045px;top:745.5px;" width="12.5" height="12.5" viewBox="0 0 24 24" fill="none" stroke="#a855f7" stroke-width="2" stroke-linecap="round" stroke-linejoin="round"><path d="M22 12h-2.48a2 2 0 0 0-1.93 1.46l-2.35 8.36a.25.25 0 0 1-.48 0L9.24 2.18a.25.25 0 0 0-.48 0l-2.35 8.36A2 2 0 0 1 4.49 12H2"/></svg>
<div class="t m" style="left:44.90px;top:737.97px;font-size:12.25px;line-height:15.93px;color:#a3a3a3;">10:57:54</div>
<div class="t m" style="left:44.90px;top:753.57px;font-size:12.25px;line-height:15.93px;color:#a3a3a3;">AM</div>
<div class="a" style="left:126.20000000000005px;top:743px;width:180.70000000000005px;height:17.5px;border:1px solid #262626;border-radius:9px;box-sizing:border-box;"></div>
<div class="t s" style="left:137.00px;top:743.84px;font-size:12.5px;line-height:16.25px;color:#fafafa;font-weight:700;letter-spacing:-0.05px;">workflow_event.completed</div>
<svg class="a" style="left:24.09999999999991px;top:774.5px;" width="15" height="15" viewBox="0 0 24 24" fill="none" stroke="#a3a3a3" stroke-width="1.8" stroke-linecap="round" stroke-linejoin="round"><path d="m9 18 6-6-6-6"/></svg>
<div class="t s" style="left:46.50px;top:772.95px;font-size:14px;line-height:18.2px;color:#a3a3a3;letter-spacing:0.24px;">Executor: unknown</div>
</div>
<div class="a" style="left:1248px;top:902px;width:316px;height:1px;background:#262626;"></div>
<div class="a" style="left:1248px;top:903px;width:316px;height:50px;background:#141414;"></div>
<div class="a" style="left:1259px;top:914px;width:296px;height:32px;background:#1c1c1c;border:1px solid #333333;border-radius:9px;box-sizing:border-box;"></div>
<svg class="a" style="left:1338.8px;top:921.4px;" width="16.2" height="16.2" viewBox="0 0 24 24" fill="none" stroke="#fafafa" stroke-width="2" stroke-linecap="round" stroke-linejoin="round"><path d="M4.5 16.5c-1.5 1.26-2 5-2 5s3.74-.5 5-2c.71-.84.7-2.13-.09-2.91a2.18 2.18 0 0 0-2.91-.09z"/><path d="m12 15-3-3a22 22 0 0 1 2-3.95A12.88 12.88 0 0 1 22 2c0 2.72-.78 7.5-6 11a22.35 22.35 0 0 1-4 2z"/><path d="M9 12H4s.55-3.03 2-4c1.62-1.08 5 0 5 0"/><path d="M12 15v5s3.03-.55 4-2c1.08-1.62 0-5 0-5"/></svg>
<div class="t s" style="left:1368.80px;top:922.15px;font-size:13px;line-height:16.9px;color:#fafafa;font-weight:700;letter-spacing:-0.55px;">Deployment Guide</div>
<svg class="a" style="left:0;top:923px" width="30" height="30" viewBox="0 0 30 30"><path d="M0 15 Q1 26 8 30 L0 30 Z" fill="#1a1a1a"/><path d="M2 24 Q4 28 7 30 L2 30 Z" fill="#9a9a9a"/><path d="M0 15 Q1 26 8 30" stroke="#5a5a5a" stroke-width="1" fill="none"/></svg>
<svg class="a" style="left:1534px;top:923px" width="30" height="30" viewBox="0 0 30 30"><path d="M30 19 Q28 27 22 30 L30 30 Z" fill="#1c1a16"/><path d="M30 19 Q28 27 22 30" stroke="#5a5a5a" stroke-width="1" fill="none"/></svg>
</body></html>
